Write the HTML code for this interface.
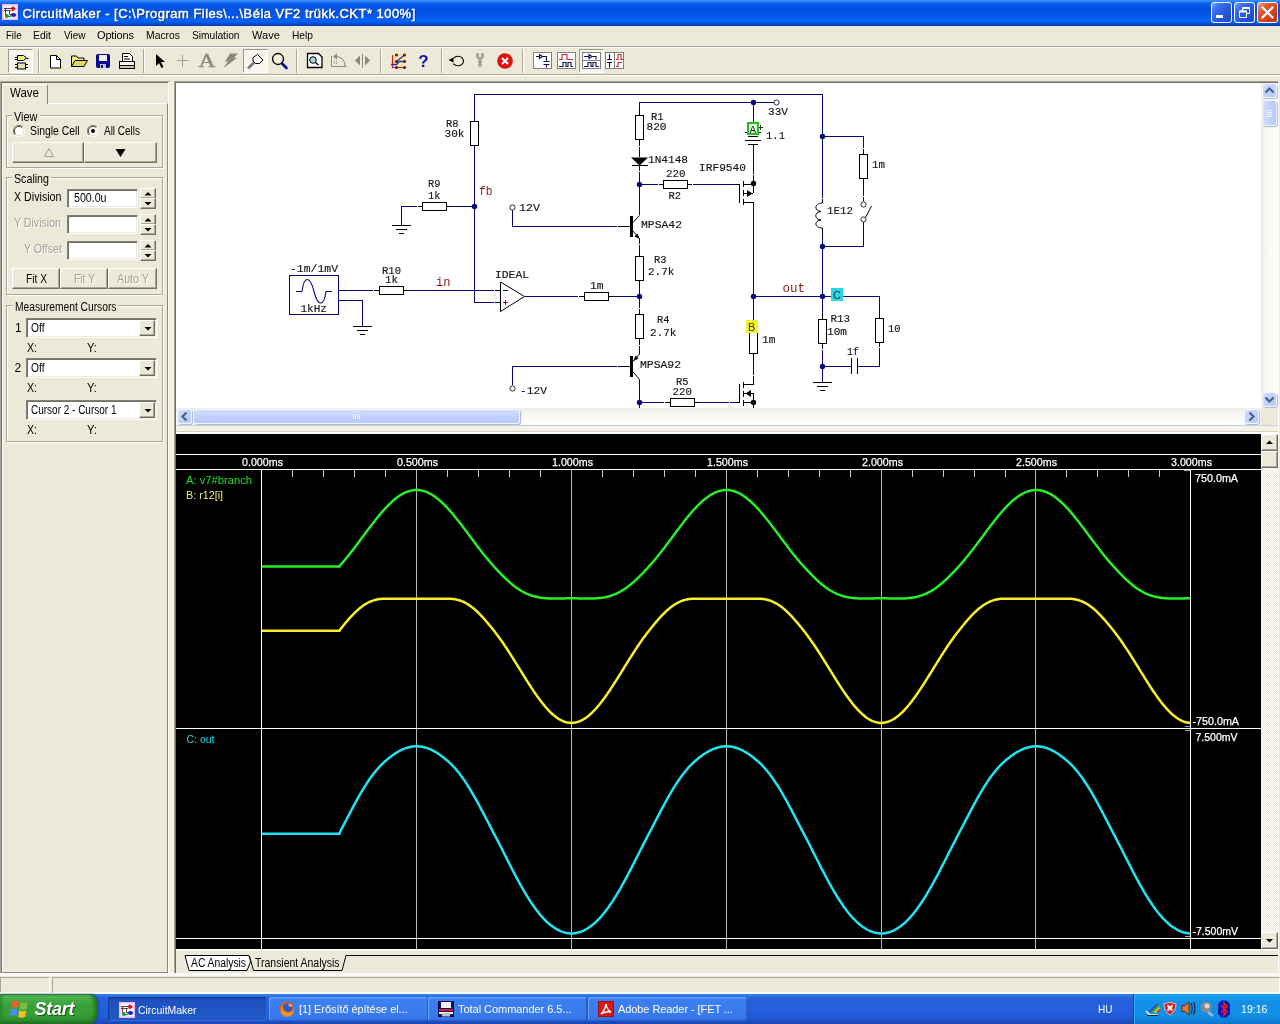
<!DOCTYPE html>
<html lang="hu"><head><meta charset="utf-8"><title>CircuitMaker</title>
<style>
*{box-sizing:border-box;margin:0;padding:0}
html,body{width:1280px;height:1024px;overflow:hidden;background:#ece9d8}
body{position:relative;font-family:"Liberation Sans",sans-serif;font-size:11px;color:#000}
div,span,i,svg{position:absolute;display:block}
#root{left:0;top:0;width:1280px;height:1024px;overflow:hidden;will-change:transform;background:#ece9d8}
.abs{position:absolute}
.t{white-space:pre;line-height:1;font-style:normal;transform-origin:0 0}
#titlebar{left:0;top:0;width:1280px;height:26px;background:linear-gradient(to bottom,#3d95ff 0,#2f86fa 1px,#1168f0 3px,#0658e8 5px,#0353e2 9px,#0456e8 15px,#0661f5 19px,#0560f2 22px,#0349cc 24px,#023aa8 26px)}
.wbtn{top:2px;width:21px;height:21px;border:1px solid #fff;border-radius:3px;background:linear-gradient(135deg,#7aa4f8 0,#3c6ef0 25%,#2458e0 60%,#1c48c8 100%)}
.wbtn svg{left:-1px;top:-1px}
.wbtn.close{background:linear-gradient(135deg,#f0a088 0,#e05a38 30%,#d04018 70%,#b83010 100%)}
#menubar{left:0;top:26px;width:1280px;height:20px;background:#ece9d8}
#toolbar{left:0;top:46px;width:1280px;height:30px;background:#ece9d8;border-top:1px solid #aca899;box-shadow:inset 0 1px 0 #fff}
#toolbar>svg{top:0!important}
#tbline{left:0;top:74px;width:1280px;height:2px;border-top:1px solid #aca899;border-bottom:1px solid #fff}
.tsep{top:2px;width:2px;height:24px;border-left:1px solid #aca899;border-right:1px solid #fff}
.tchk{top:2px;height:24px;background:#f6f5ee;border:1px solid;border-color:#9c9a8c #fff #fff #9c9a8c}
#lpanel{left:0;top:81px;width:170px;height:893px;background:#ece9d8;box-shadow:inset 1px 1px 0 #aca899,inset 2px 2px 0 #716f64}
#lpedge{left:168px;top:82px;width:6px;height:892px;background:#f3f1e6;border-left:1px solid #fff}
#lpbot{left:0;top:973px;width:174px;height:1px;background:#fff}
#tabpage{left:2px;top:22px;width:166px;height:870px;border:1px solid;border-color:#fff #8c897c #8c897c #fff}
#tab{left:2px;top:3px;width:46px;height:20px;background:#ece9d8;border:1px solid;border-color:#fff #8c897c transparent #fff;border-bottom:0;border-radius:2px 2px 0 0}
.grp{border:1px solid #aca899;box-shadow:1px 1px 0 #fff,inset 1px 1px 0 #fff}
.glbl{background:#ece9d8}
.btn{background:#ece9d8;border:1px solid;border-color:#fff #716f64 #716f64 #fff;box-shadow:inset -1px -1px 0 #aca899}
.edit{background:#fff;border:1px solid;border-color:#848078 #fff #fff #848078;box-shadow:inset 1px 1px 0 #716f64,inset -1px -1px 0 #ece9d8}
#sframe{left:174px;top:81px;width:1105px;height:893px;border:1px solid;border-color:#aca899 #fff #fff #aca899;box-shadow:inset 1px 1px 0 #716f64;background:#ece9d8}
#sbg{left:176px;top:83px;width:1085px;height:325px;background:#fff}
#schem{left:176px;top:83px}
#vsb{left:1261px;top:83px;width:17px;height:325px;background:linear-gradient(to right,#eeede5,#f8f8f4 40%,#fdfdfb)}
#hsb{left:176px;top:408px;width:1085px;height:17px;background:linear-gradient(to bottom,#eeede5,#f8f8f4 40%,#fdfdfb)}
#sbcorner{left:1261px;top:408px;width:17px;height:17px;background:#ece9d8}
.sbb{width:15px;height:15px;border:1px solid #f4f7fe;border-radius:3px;background:linear-gradient(135deg,#d2defd,#c0d2fc 50%,#b6caf9);box-shadow:1px 1px 1px #a8b4d0}
.sbt{border:1px solid #f4f7fe;border-radius:3px;background:linear-gradient(to right,#d2defd,#c2d3fc 50%,#b6caf9);box-shadow:1px 1px 1px #a8b4d0}
.sbt.h{background:linear-gradient(to bottom,#d2defd,#c2d3fc 50%,#b6caf9)}
#split{left:176px;top:425px;width:1102px;height:9px;background:#f4f2e8;border-top:1px solid #c9d0dc;border-bottom:2px solid #fff;box-shadow:inset 0 -1px 0 #d8d2bd}
#wave{left:176px;top:434px}
#wsb{left:1261px;top:434px;width:17px;height:515px;background:repeating-conic-gradient(#fff 0 25%,#ece9d8 0 50%) 0 0/2px 2px}
#tabs{left:176px;top:949px;width:1102px;height:24px;background:#ece9d8;box-shadow:inset 0 1px 0 #fff,inset 0 2px 0 #f6f4ec}
#statusbar{left:0;top:973px;width:1280px;height:21px;background:#ece9d8;border-top:3px solid #fbfaf6;border-bottom:1px solid #fff}
.spane{top:1px;height:16px;border:1px solid;border-color:#aca899 #fff #fff #aca899}
#taskbar{left:0;top:994px;width:1280px;height:30px;background:linear-gradient(to bottom,#3c84f0 0,#2868e0 3px,#2460dc 6px,#245edc 18px,#2058d0 24px,#1c4cc0 28px,#1a44b0 30px)}
#start{left:0;top:0;width:98px;height:30px;border-radius:0 7px 7px 0 / 0 15px 15px 0;background:linear-gradient(to bottom,#2c7c2c 0,#58b858 2px,#44ac44 6px,#38a038 12px,#36a036 20px,#2e8e30 26px,#236c26 30px);box-shadow:inset -4px 0 5px -2px #1c5c20,inset 3px 0 4px -2px #267a28,1px 0 2px #1840a0}
.task{top:3px;width:159px;height:24px;border-radius:3px;background:linear-gradient(to bottom,#4c90f8 0,#3c80f0 3px,#3878ec 20px,#3070e0 24px);box-shadow:inset 1px 1px 0 #6aa4fc,inset -1px -1px 0 #2a5cc8}
.task.act{background:linear-gradient(to bottom,#1a48b0 0,#1e50c0 4px,#2058c8 20px,#2058c8 24px);box-shadow:inset 1px 1px 1px #123890,inset -1px -1px 0 #3068d8}
#tray{left:1133px;top:0;width:147px;height:30px;background:linear-gradient(to bottom,#1ca0f0 0,#189cf0 2px,#1290e8 8px,#1290e8 20px,#0f80d8 27px,#0c70c8 30px);border-left:1px solid #0a3c90;box-shadow:inset 1px 0 0 #38b0f8}
</style></head>
<body>
<div id="root">
<div id="titlebar">
<svg class="abs" style="left:2px;top:4px" width="16" height="16" viewBox="0 0 16 16"><rect x="0" y="0" width="16" height="16" fill="#f8b8f4"/><rect x="1.500" y="1.500" width="13" height="13" fill="#fdf4fc"/><path d="M2 4.500H10 M2 6.500H9 M3.500 4V12 M7.500 6.500V10.500H11" stroke="#504040" stroke-width="1" fill="none"/><path d="M10 2.300L14.300 4.800L10 7.300Z" fill="#d81818"/><circle cx="11" cy="4.800" r="2" fill="#d81818"/><ellipse cx="11.500" cy="11" rx="2.600" ry="2.100" fill="#1424b8"/><circle cx="4.800" cy="12" r="1.900" fill="#18a038"/><path d="M5 12.500Q8 13 9.500 11.500" stroke="#18a038" stroke-width="1.200" fill="none"/></svg>
<span class="t" style="left:22.5px;top:7px;font-size:13px;color:#fff;letter-spacing:0.47px;-webkit-text-stroke:0.45px #fff;text-shadow:1px 1px 0 #0a2a7a;">CircuitMaker - [C:\Program Files\...\Béla VF2 trükk.CKT* 100%]</span>
<div class="wbtn" style="left:1211px"><svg width="21" height="21" viewBox="0 0 21 21"><rect x="5" y="13" width="7" height="3" fill="#fff"/></svg></div>
<div class="wbtn" style="left:1234px"><svg width="21" height="21" viewBox="0 0 21 21"><path d="M8.5 5.5h7v6h-7z M8.5 6.5h7" fill="none" stroke="#fff" stroke-width="1"/><path d="M5.5 9h7v6.5h-7z" fill="#2d63d8" stroke="#fff" stroke-width="1"/><path d="M5.5 9.5h7" stroke="#fff" stroke-width="2"/></svg></div>
<div class="wbtn close" style="left:1257px"><svg width="21" height="21" viewBox="0 0 21 21"><path d="M5.5 5.5l10 10M15.5 5.5l-10 10" stroke="#fff" stroke-width="2.2" stroke-linecap="round"/></svg></div>
</div>
<div id="menubar">
<span class="t" style="left:5.5px;top:4px;font-size:11px;color:#000;transform:scaleX(0.874);">File</span>
<span class="t" style="left:33px;top:4px;font-size:11px;color:#000;transform:scaleX(0.949);">Edit</span>
<span class="t" style="left:63.5px;top:4px;font-size:11px;color:#000;transform:scaleX(0.909);">View</span>
<span class="t" style="left:97px;top:4px;font-size:11px;color:#000;letter-spacing:-0.15px;">Options</span>
<span class="t" style="left:146px;top:4px;font-size:11px;color:#000;transform:scaleX(0.943);">Macros</span>
<span class="t" style="left:192px;top:4px;font-size:11px;color:#000;transform:scaleX(0.925);">Simulation</span>
<span class="t" style="left:252px;top:4px;font-size:11px;color:#000;letter-spacing:0.09px;">Wave</span>
<span class="t" style="left:292px;top:4px;font-size:11px;color:#000;transform:scaleX(0.928);">Help</span>
</div>
<div id="toolbar">
<i class="tsep" style="left:38px"></i>
<i class="tsep" style="left:143px"></i>
<i class="tsep" style="left:296px"></i>
<i class="tsep" style="left:380px"></i>
<i class="tsep" style="left:441px"></i>
<i class="tsep" style="left:522px"></i>
<i class="tchk" style="left:8px;width:25px"></i>
<i class="tchk" style="left:243px;width:25px"></i>
<i class="tchk" style="left:579px;width:25px"></i>
<svg class="abs" style="left:0;top:0" width="640" height="28" viewBox="0 47 640 28">
<g stroke="#000" stroke-width="1" fill="#f0f080"><path d="M17.5 55.5h6l3 2.5l-3 2.500h-6z"/><path d="M15 57.500h2.500M15 59.500h2.500M26.500 58.500h2"/><rect x="17.500" y="63" width="8" height="6" fill="#e8e0a0"/><path d="M15 64.500h2.500M15 67.500h2.500M25.500 64.500h2.500M25.500 67.500h2.500"/></g>
<path d="M50.500 55.500h6l4 4v8.500h-10z" fill="#fff" stroke="#000"/><path d="M56.500 55.500v4h4" fill="none" stroke="#000"/><path d="M49 61l-1.500 0M61 56l2-2M62 67l1.500 1.500" stroke="#f0f040" stroke-width="1.500"/>
<path d="M71.500 66.500v-10.500h5l1.500 2h6v2.500" fill="#f0f080" stroke="#000"/><path d="M71.500 66.500l3.500-6h12.500l-3.500 6z" fill="#e0d860" stroke="#000"/>
<rect x="96.500" y="54.500" width="13" height="13" rx="1" fill="#0a0a90" stroke="#0a0a90"/><rect x="99" y="55" width="8" height="6" fill="#f0f0f0"/><rect x="100" y="64" width="6" height="4" fill="#c0c0d8"/><rect x="101" y="65" width="2" height="3" fill="#0a0a90"/>
<path d="M122.500 61.500v-8h7l3 3v5" fill="#fff" stroke="#000"/><path d="M124 56.500h4M124 59h6" stroke="#000"/><rect x="119.500" y="61.500" width="15" height="4" fill="#f8f8f0" stroke="#000"/><rect x="119.500" y="65.500" width="15" height="3" fill="#c8c8b8" stroke="#000"/>
<path d="M156 54v12l3-3l2.500 5l2-1l-2.500-5h4z" fill="#000"/>
<path d="M182.500 55v12M177 60.500h11.500" stroke="#a0a098" stroke-width="1" fill="none"/>
<text x="0" y="0" transform="translate(198.500 67) scale(1.2 1)" font-family="'Liberation Serif', serif" font-size="19.500" fill="#8a8880" stroke="#8a8880" stroke-width="0.400">A</text>
<path d="M230 53.500L238 53.500L234 58L237 58L223.500 68L228 61.500L225 61.500Z" fill="#8a8880"/>
<path d="M257.500 54.500l5.500 5.500l-3.500 3.500h-4l-2.500-2.500v-3.500z" fill="#f8f8f0" stroke="#000"/><path d="M253.500 62l-5.500 5.500l1 1l5.500-5.500" fill="#fff" stroke="#000"/>
<circle cx="278" cy="59" r="5.500" fill="#f4f0e4" stroke="#000" stroke-width="1.300"/><path d="M282 63.500l4.500 4.500" stroke="#0a0a90" stroke-width="2.600" stroke-linecap="round"/>
<path d="M307.500 53.500h11l3.500 3.500v10.500h-14.500z" fill="#fff" stroke="#000" stroke-width="1.300"/><circle cx="313" cy="60" r="3.300" fill="#a8d8d8" stroke="#000"/><path d="M315.500 62.500l3 2.500" stroke="#000" stroke-width="1.500"/>
<path d="M331.500 56v10.500h15" fill="none" stroke="#8a8880"/><path d="M336 56.500a9 9 0 0 1 9 9.500" fill="none" stroke="#8a8880"/><path d="M333 56.500l4-3v6z" fill="#8a8880"/><path d="M334 61.500h4M334 63.500h4" stroke="#8a8880" stroke-dasharray="1 1"/>
<path d="M362.500 54v14" stroke="#8a8880"/><path d="M360 55.500v10l-5-5z M365 55.500v10l5-5z" fill="#8a8880"/>
<circle cx="399" cy="60" r="7" fill="#f8e878" opacity="0.55"/><path d="M392.500 55v12.500h13" fill="none" stroke="#d02020" stroke-width="1.200"/><path d="M391 64.500h5.500l3-3h6M396.500 61.500l8.500-7" fill="none" stroke="#2030b0" stroke-width="1.300"/><g fill="#602020"><circle cx="396.500" cy="55" r="1.600"/><circle cx="404.500" cy="55" r="1.600"/><circle cx="396.500" cy="61.500" r="1.600"/><circle cx="404.500" cy="61.500" r="1.600"/><circle cx="396.500" cy="67.500" r="1.600"/><circle cx="404.500" cy="67.500" r="1.600"/></g>
<text x="423.500" y="66.500" font-family="'Liberation Sans', sans-serif" font-size="17" font-weight="bold" fill="#1010b0" text-anchor="middle">?</text>
<ellipse cx="458" cy="61" rx="5.500" ry="4.800" fill="none" stroke="#000" stroke-width="1.100" stroke-dasharray="27 6" stroke-dashoffset="-19"/><path d="M448.500 60l5-2.500v5z" fill="#000"/>
<path d="M476.500 53.500v4l2 2v6a1.500 1.500 0 0 0 3 0v-6l2-2v-4h-2v3.500h-3v-3.500z" fill="#a8a698" stroke="#a8a698" stroke-width="0.800"/>
<circle cx="505" cy="61" r="7.800" fill="#e01010"/><path d="M502 58l6 6M508 58l-6 6" stroke="#fff" stroke-width="2"/>
<rect x="533.5" y="52.500" width="18" height="16" fill="#fff" stroke="#808080"/><path d="M536 56.500h3.500M539.500 54.500v4l3-2zM542.500 56.500h4v4.500M543.500 61.500h6M543.500 64.500h6M546.500 64.500v3" fill="none" stroke="#101050" stroke-width="1.100"/>
<rect x="557.5" y="52.500" width="18" height="16" fill="#fff" stroke="#808080"/><path d="M559 59.500h3v-5h5v5h6" fill="none" stroke="#d02020" stroke-width="1.100"/><path d="M559 66.500h4v-4h3v4h2v-4h3v4h2" fill="none" stroke="#101050" stroke-width="1.100"/>
<rect x="582.5" y="52.500" width="18" height="16" fill="#fff" stroke="#808080"/><path d="M582.500 60.500h18" stroke="#808080"/><path d="M584 56.500h5M589 54.500v4l3-2zM592 56.500h4v3" fill="none" stroke="#101050" stroke-width="1.100"/><path d="M584 66.500h4v-4h3v4h2v-4h3v4h3" fill="none" stroke="#101050" stroke-width="1.100"/>
<rect x="605.5" y="52.500" width="18" height="16" fill="#fff" stroke="#808080"/><path d="M614.500 52.500v16" stroke="#808080"/><path d="M609.500 54v5M607 59.500h5M607 62.500h5M609.500 62.500v5" fill="none" stroke="#101050" stroke-width="1.100"/><path d="M616 59.500h2v-5h3v5h2M616 66.500h2v-4h4" fill="none" stroke="#d02020" stroke-width="1.100"/>
</svg>
</div>
<div id="tbline"></div>
<div id="lpanel">
<div id="tabpage"></div>
<div id="tab"></div>
<span class="t" style="left:10px;top:6px;font-size:12px;color:#000;transform:scaleX(0.959);">Wave</span>
<div class="grp" style="left:6px;top:34px;width:157px;height:53px"></div><span class="glbl" style="left:12px;top:29px;width:27.5px;height:12px"></span><span class="t" style="left:14px;top:30px;font-size:12px;color:#000;transform:scaleX(0.911);">View</span>
<svg class="abs" style="left:13px;top:43.5px" width="12" height="12" viewBox="0 0 12 12"><circle cx="6" cy="6" r="5.500" fill="#fff"/><path d="M10 2A5.500 5.500 0 0 0 2 10" fill="none" stroke="#848078" stroke-width="1"/><path d="M9.300 2.700A4.500 4.500 0 0 0 2.700 9.300" fill="none" stroke="#404040" stroke-width="1"/><path d="M2 10A5.500 5.500 0 0 0 10 2" fill="none" stroke="#fff" stroke-width="1"/><path d="M2.700 9.300A4.500 4.500 0 0 0 9.300 2.700" fill="none" stroke="#e0dcd0" stroke-width="1"/></svg>
<span class="t" style="left:30px;top:44px;font-size:12px;color:#000;transform:scaleX(0.863);">Single Cell</span>
<svg class="abs" style="left:87px;top:43.5px" width="12" height="12" viewBox="0 0 12 12"><circle cx="6" cy="6" r="5.500" fill="#fff"/><path d="M10 2A5.500 5.500 0 0 0 2 10" fill="none" stroke="#848078" stroke-width="1"/><path d="M9.300 2.700A4.500 4.500 0 0 0 2.700 9.300" fill="none" stroke="#404040" stroke-width="1"/><path d="M2 10A5.500 5.500 0 0 0 10 2" fill="none" stroke="#fff" stroke-width="1"/><path d="M2.700 9.300A4.500 4.500 0 0 0 9.300 2.700" fill="none" stroke="#e0dcd0" stroke-width="1"/><circle cx="6" cy="6" r="2" fill="#000"/></svg>
<span class="t" style="left:104px;top:44px;font-size:12px;color:#000;transform:scaleX(0.831);">All Cells</span>
<div class="btn" style="left:12px;top:61px;width:72px;height:21px"><svg class="abs" style="left:0;top:0" width="72" height="20"><path d="M31.500 13.500h9l-4.500-8z" fill="none" stroke="#a0a098"/></svg></div>
<div class="btn" style="left:84px;top:61px;width:73px;height:21px"><svg class="abs" style="left:0;top:0" width="73" height="20"><path d="M30.500 6h10l-5 8z" fill="#000"/></svg></div>
<div class="grp" style="left:6px;top:96px;width:157px;height:118px"></div><span class="glbl" style="left:12px;top:91px;width:39px;height:12px"></span><span class="t" style="left:14px;top:92px;font-size:12px;color:#000;transform:scaleX(0.889);">Scaling</span>
<span class="t" style="left:13.5px;top:110px;font-size:12px;color:#000;transform:scaleX(0.890);">X Division</span>
<div class="edit" style="left:67px;top:108px;width:71px;height:19px"></div>
<span class="t" style="left:73.5px;top:111px;font-size:12px;color:#000;transform:scaleX(0.885);">500.0u</span>
<div class="btn" style="left:140px;top:107px;width:16px;height:11px"><svg class="abs" style="left:-1px;top:-1px" width="16" height="11"><path d="M4.500 7.500h7l-3.500-3.500z" fill="#000"/></svg></div><div class="btn" style="left:140px;top:117px;width:16px;height:11px"><svg class="abs" style="left:-1px;top:-1px" width="16" height="11"><path d="M4.500 4h7l-3.500 3.500z" fill="#000"/></svg></div>
<span class="t" style="left:14px;top:136px;font-size:12px;color:#a0a098;transform:scaleX(0.884);text-shadow:1px 1px 0 #fff;">Y Division</span>
<div class="edit" style="left:67px;top:134px;width:71px;height:19px"></div>
<div class="btn" style="left:140px;top:133px;width:16px;height:11px"><svg class="abs" style="left:-1px;top:-1px" width="16" height="11"><path d="M4.500 7.500h7l-3.500-3.500z" fill="#000"/></svg></div><div class="btn" style="left:140px;top:143px;width:16px;height:11px"><svg class="abs" style="left:-1px;top:-1px" width="16" height="11"><path d="M4.500 4h7l-3.500 3.500z" fill="#000"/></svg></div>
<span class="t" style="left:24px;top:162px;font-size:12px;color:#a0a098;transform:scaleX(0.885);text-shadow:1px 1px 0 #fff;">Y Offset</span>
<div class="edit" style="left:67px;top:160px;width:71px;height:19px"></div>
<div class="btn" style="left:140px;top:159px;width:16px;height:11px"><svg class="abs" style="left:-1px;top:-1px" width="16" height="11"><path d="M4.500 7.500h7l-3.500-3.500z" fill="#000"/></svg></div><div class="btn" style="left:140px;top:169px;width:16px;height:11px"><svg class="abs" style="left:-1px;top:-1px" width="16" height="11"><path d="M4.500 4h7l-3.500 3.500z" fill="#000"/></svg></div>
<div class="btn" style="left:12px;top:187px;width:48px;height:21px"></div>
<span class="t" style="left:26px;top:192px;font-size:12px;color:#000;transform:scaleX(0.851);">Fit X</span>
<div class="btn" style="left:60px;top:187px;width:48px;height:21px"></div>
<span class="t" style="left:74px;top:192px;font-size:12px;color:#a0a098;transform:scaleX(0.859);text-shadow:1px 1px 0 #fff;">Fit Y</span>
<div class="btn" style="left:108px;top:187px;width:49px;height:21px"></div>
<span class="t" style="left:117px;top:192px;font-size:12px;color:#a0a098;transform:scaleX(0.894);text-shadow:1px 1px 0 #fff;">Auto Y</span>
<div class="grp" style="left:6px;top:224px;width:157px;height:137px"></div><span class="glbl" style="left:12.5px;top:219px;width:105.5px;height:12px"></span><span class="t" style="left:14.5px;top:220px;font-size:12px;color:#000;transform:scaleX(0.855);">Measurement Cursors</span>
<span class="t" style="left:15px;top:241px;font-size:12px;color:#000;">1</span>
<div class="edit" style="left:26px;top:237px;width:131px;height:20px"></div><div class="btn" style="left:139px;top:239px;width:16px;height:16px"><svg class="abs" style="left:0;top:0" width="16" height="15"><path d="M4.500 6h7l-3.500 3.500z" fill="#000"/></svg></div><span class="t" style="left:30.5px;top:241px;font-size:12px;color:#000;transform:scaleX(0.855);">Off</span>
<span class="t" style="left:26.5px;top:261px;font-size:12px;color:#000;transform:scaleX(0.882);">X:</span>
<span class="t" style="left:86.5px;top:261px;font-size:12px;color:#000;transform:scaleX(0.936);">Y:</span>
<span class="t" style="left:14.5px;top:281px;font-size:12px;color:#000;">2</span>
<div class="edit" style="left:26px;top:277px;width:131px;height:20px"></div><div class="btn" style="left:139px;top:279px;width:16px;height:16px"><svg class="abs" style="left:0;top:0" width="16" height="15"><path d="M4.500 6h7l-3.500 3.500z" fill="#000"/></svg></div><span class="t" style="left:30.5px;top:281px;font-size:12px;color:#000;transform:scaleX(0.855);">Off</span>
<span class="t" style="left:26.5px;top:301px;font-size:12px;color:#000;transform:scaleX(0.882);">X:</span>
<span class="t" style="left:86.5px;top:301px;font-size:12px;color:#000;transform:scaleX(0.936);">Y:</span>
<div class="edit" style="left:26px;top:319px;width:131px;height:20px"></div><div class="btn" style="left:139px;top:321px;width:16px;height:16px"><svg class="abs" style="left:0;top:0" width="16" height="15"><path d="M4.500 6h7l-3.500 3.500z" fill="#000"/></svg></div><span class="t" style="left:30.5px;top:323px;font-size:12px;color:#000;transform:scaleX(0.832);">Cursor 2 - Cursor 1</span>
<span class="t" style="left:26.5px;top:343px;font-size:12px;color:#000;transform:scaleX(0.882);">X:</span>
<span class="t" style="left:86.5px;top:343px;font-size:12px;color:#000;transform:scaleX(0.936);">Y:</span>
</div>
<div id="lpedge"></div><div id="lpbot"></div>
<div id="sframe"></div><div id="sbg"></div>
<svg id="schem" width="1085" height="325" viewBox="176 83 1085 325" shape-rendering="crispEdges" font-family="'Liberation Mono', monospace">
<g shape-rendering="crispEdges">
<path d="M474.5 121V94.5H822.5V200 M639.5 109V102.5H776 M753.5 102V122 M753.5 146V176 M474.5 145V302.5H494 M401.5 225V206.5H417 M451 206.5H474 M339 290.5H374 M408 290.5H494 M339 300.500H362.500V326 M512.5 210V226.5H618 M512.5 385V366.5H618 M525 296.5H579 M613 296.5H639 M639.5 145V157 M639.5 166V215 M639.5 184.5H658 M693 184.5H739 M639.5 243V250 M639.5 286V308 M639.5 344V351 M639.5 380V409 M639.5 402.5H665 M699 402.5H735 M753.5 203V323 M753.5 359V378 M753.5 403V409 M753.5 296.5H879.500V312 M822.5 136.5H863.500V149 M863.5 184V197 M863.5 222V246.500H822 M822.5 233V313 M822.5 349V382 M822.5 366.5H851 M858 366.5H879.500V348" stroke="#06067a" fill="none"/>
<rect x="289.5" y="275.5" width="49" height="39" fill="#fff" stroke="#06067a"/>
<path d="M296 291.5H302 M326 291.5H332" stroke="#06067a"/>
<path d="M302 291.500C304 275.500 310 275.500 314 291.500S324 306 326 291.500" stroke="#06067a" fill="none" shape-rendering="auto" stroke-width="1.100"/>
<path d="M374 290.5H379 M403 290.5H408" stroke="#000"/><rect x="379.5" y="286.5" width="24" height="8" fill="#fff" stroke="#000"/>
<path d="M417 206.5H422 M446 206.5H451" stroke="#000"/><rect x="422.5" y="202.5" width="24" height="8" fill="#fff" stroke="#000"/>
<path d="M474.5 121V121 M474.5 145V145" stroke="#000"/><rect x="470.5" y="121.5" width="8" height="24" fill="#fff" stroke="#000"/>
<path d="M639.5 109V115 M639.5 139V145" stroke="#000"/><rect x="635.5" y="115.5" width="8" height="24" fill="#fff" stroke="#000"/>
<path d="M658 184.5H663 M687 184.5H692" stroke="#000"/><rect x="663.5" y="180.5" width="24" height="8" fill="#fff" stroke="#000"/>
<path d="M639.5 250V256 M639.5 280V286" stroke="#000"/><rect x="635.5" y="256.5" width="8" height="24" fill="#fff" stroke="#000"/>
<path d="M579 296.5H584 M608 296.5H613" stroke="#000"/><rect x="584.5" y="292.5" width="24" height="8" fill="#fff" stroke="#000"/>
<path d="M639.5 308V314 M639.5 338V344" stroke="#000"/><rect x="635.5" y="314.5" width="8" height="24" fill="#fff" stroke="#000"/>
<path d="M665 402.5H670 M694 402.5H699" stroke="#000"/><rect x="670.5" y="398.5" width="24" height="8" fill="#fff" stroke="#000"/>
<path d="M863.5 148V154 M863.5 178V184" stroke="#000"/><rect x="859.5" y="154.5" width="8" height="24" fill="#fff" stroke="#000"/>
<path d="M753.5 323V329 M753.5 353V359" stroke="#000"/><rect x="749.5" y="329.5" width="8" height="24" fill="#fff" stroke="#000"/>
<path d="M822.5 313V319 M822.5 343V349" stroke="#000"/><rect x="818.5" y="319.5" width="8" height="24" fill="#fff" stroke="#000"/>
<path d="M879.5 312V318 M879.5 342V348" stroke="#000"/><rect x="875.5" y="318.5" width="8" height="24" fill="#fff" stroke="#000"/>
<path d="M353 326.5H372 M357 330.5H368 M360 334.5H365" stroke="#000"/>
<path d="M392 225.5H411 M396 229.5H407 M399 233.5H404" stroke="#000"/>
<path d="M813 382.5H832 M817 386.5H828 M820 390.5H825" stroke="#000"/>
<path d="M494 290.5H500 M494 302.5H500" stroke="#000"/>
<path d="M500.5 282L524.500 296.500L500.500 311.500Z" fill="#fff" stroke="#000" shape-rendering="auto"/>
<path d="M503 290.500H508" stroke="#06067a"/>
<path d="M503 302.500H508 M505.500 300V305" stroke="#c00000"/>
<path d="M631 157.500H648L639.500 165.500Z" fill="#000" shape-rendering="auto"/><path d="M632 165.500H648" stroke="#000"/>
<rect x="630" y="216" width="3" height="21" fill="#000"/>
<path d="M618 226.500H630" stroke="#000"/>
<path d="M633 222.500L639.500 215.500 M633 231L639.500 238.500V243" stroke="#000" fill="none" shape-rendering="auto"/>
<path d="M639.500 239L634.500 236.500L637.500 233.500Z" fill="#000" shape-rendering="auto"/>
<rect x="630" y="356" width="3" height="21" fill="#000"/>
<path d="M618 366.500H630" stroke="#000"/>
<path d="M639.500 351V354L633 361.500 M633 372L639.500 379.500V381" stroke="#000" fill="none" shape-rendering="auto"/>
<path d="M633.500 361L638.500 358.500L635.500 355.500Z" fill="#000" shape-rendering="auto"/>
<circle cx="512.5" cy="207.5" r="2.600" fill="#fff" stroke="#181818" stroke-width="0.900" shape-rendering="geometricPrecision"/>
<circle cx="512.5" cy="388.5" r="2.600" fill="#fff" stroke="#181818" stroke-width="0.900" shape-rendering="geometricPrecision"/>
<circle cx="776.5" cy="102.5" r="2.600" fill="#fff" stroke="#181818" stroke-width="0.900" shape-rendering="geometricPrecision"/>
<path d="M745 132.500H761 M748 136.500H758 M745 140.500H761 M748 144.500H758" stroke="#000"/>
<path d="M753.500 122V132 M753.500 145V147" stroke="#000"/>
<path d="M758 127.500H763 M760.500 125V130" stroke="#303030"/>
<path d="M739.500 184V203 M743.500 181V187 M743.500 190V196 M743.500 199V205 M744 184.500H753 M744 193.500H753 M753.500 184V193 M744 202.500H753.500 M753.500 176V184 M735 184.500H740" stroke="#000" fill="none"/>
<path d="M752.500 193.500L747 190V197Z" fill="#000" shape-rendering="auto"/>
<circle cx="753.5" cy="183.5" r="2.700" fill="#000" shape-rendering="geometricPrecision"/>
<path d="M739.500 384V403 M743.500 382V388 M743.500 391V397 M743.500 400V406 M744 384.500H753.500V378 M744 393.500H753.500V402 M744 402.500H753 M735 402.500H740" stroke="#000" fill="none"/>
<path d="M745.500 393.500L751 390V397Z" fill="#000" shape-rendering="auto"/>
<circle cx="753.5" cy="402.5" r="2.700" fill="#000" shape-rendering="geometricPrecision"/>
<path d="M822.500 198V203 M822.500 228V233" stroke="#000"/>
<path d="M822.500 203C814 203 814 211 821 211.500C814 212 814 219.500 821 220C814 220.500 814 228 822.500 228" stroke="#000" fill="none" shape-rendering="auto"/>
<path d="M863.500 197V201 M863.500 222V224" stroke="#000"/>
<circle cx="863.5" cy="204.5" r="2.600" fill="#fff" stroke="#181818" stroke-width="0.900" shape-rendering="geometricPrecision"/>
<circle cx="863.5" cy="219.5" r="2.600" fill="#fff" stroke="#181818" stroke-width="0.900" shape-rendering="geometricPrecision"/>
<path d="M865.500 217.500L871.500 206" stroke="#000" shape-rendering="auto"/>
<path d="M851.500 358V374 M857.500 358V374" stroke="#000"/>
<path d="M373 290.5h1 M417 206.5h1 M494 290.5h1 M494 302.5h1 M617 226.5h1 M617 366.5h1 M578 296.5h1 M664 402.5h1 M729 402.5h1 M658 184.5h1 M639.5 244v1 M639.5 308v1 M639.5 171v1 M639.5 146v1 M753.5 174v1 M753.5 375v1 M822.5 349v1 M879.5 347v1 M863.5 148v1 M822.5 198v1 M863.5 196v1 M639.5 345v1" stroke="#fff"/>
<circle cx="474.5" cy="206.5" r="2.700" fill="#06067a" shape-rendering="geometricPrecision"/>
<circle cx="639.5" cy="184.5" r="2.700" fill="#06067a" shape-rendering="geometricPrecision"/>
<circle cx="639.5" cy="296.5" r="2.700" fill="#06067a" shape-rendering="geometricPrecision"/>
<circle cx="639.5" cy="402.5" r="2.700" fill="#06067a" shape-rendering="geometricPrecision"/>
<circle cx="753.5" cy="102.5" r="2.700" fill="#06067a" shape-rendering="geometricPrecision"/>
<circle cx="753.5" cy="296.5" r="2.700" fill="#06067a" shape-rendering="geometricPrecision"/>
<circle cx="822.5" cy="136.5" r="2.700" fill="#06067a" shape-rendering="geometricPrecision"/>
<circle cx="822.5" cy="246.5" r="2.700" fill="#06067a" shape-rendering="geometricPrecision"/>
<circle cx="822.5" cy="296.5" r="2.700" fill="#06067a" shape-rendering="geometricPrecision"/>
<circle cx="822.5" cy="366.5" r="2.700" fill="#06067a" shape-rendering="geometricPrecision"/>
<rect x="748" y="123" width="10" height="11" fill="#e8ffe0" stroke="#20c020" stroke-width="2"/>
<rect x="746" y="320" width="12" height="13" fill="#f4f428"/>
<rect x="831" y="288" width="12" height="13" fill="#28d8e8"/>
</g>
<g shape-rendering="auto">
<text x="290" y="272" font-size="11.5" fill="#141414" textLength="48" lengthAdjust="spacingAndGlyphs" stroke="#141414" stroke-width="0.150">-1m/1mV</text>
<text x="300.5" y="312" font-size="11.5" fill="#141414" textLength="26.5" lengthAdjust="spacingAndGlyphs" stroke="#141414" stroke-width="0.150">1kHz</text>
<text x="382" y="274" font-size="11.5" fill="#141414" textLength="19" lengthAdjust="spacingAndGlyphs" stroke="#141414" stroke-width="0.150">R10</text>
<text x="385" y="283" font-size="11.5" fill="#141414" textLength="13" lengthAdjust="spacingAndGlyphs" stroke="#141414" stroke-width="0.150">1k</text>
<text x="446" y="127" font-size="11.5" fill="#141414" textLength="12.5" lengthAdjust="spacingAndGlyphs" stroke="#141414" stroke-width="0.150">R8</text>
<text x="444.5" y="137" font-size="11.5" fill="#141414" textLength="20" lengthAdjust="spacingAndGlyphs" stroke="#141414" stroke-width="0.150">30k</text>
<text x="428" y="187" font-size="11.5" fill="#141414" textLength="12.5" lengthAdjust="spacingAndGlyphs" stroke="#141414" stroke-width="0.150">R9</text>
<text x="428" y="199" font-size="11.5" fill="#141414" textLength="12.5" lengthAdjust="spacingAndGlyphs" stroke="#141414" stroke-width="0.150">1k</text>
<text x="519" y="210.5" font-size="11.5" fill="#141414" textLength="21" lengthAdjust="spacingAndGlyphs" stroke="#141414" stroke-width="0.150">12V</text>
<text x="520" y="394" font-size="11.5" fill="#141414" textLength="27" lengthAdjust="spacingAndGlyphs" stroke="#141414" stroke-width="0.150">-12V</text>
<text x="495" y="278" font-size="11.5" fill="#141414" textLength="34" lengthAdjust="spacingAndGlyphs" stroke="#141414" stroke-width="0.150">IDEAL</text>
<text x="651" y="120" font-size="11.5" fill="#141414" textLength="12.5" lengthAdjust="spacingAndGlyphs" stroke="#141414" stroke-width="0.150">R1</text>
<text x="646.5" y="130" font-size="11.5" fill="#141414" textLength="20" lengthAdjust="spacingAndGlyphs" stroke="#141414" stroke-width="0.150">820</text>
<text x="648" y="163" font-size="11.5" fill="#141414" textLength="40" lengthAdjust="spacingAndGlyphs" stroke="#141414" stroke-width="0.150">1N4148</text>
<text x="666" y="176.5" font-size="11.5" fill="#141414" textLength="19.5" lengthAdjust="spacingAndGlyphs" stroke="#141414" stroke-width="0.150">220</text>
<text x="668.5" y="199" font-size="11.5" fill="#141414" textLength="12.5" lengthAdjust="spacingAndGlyphs" stroke="#141414" stroke-width="0.150">R2</text>
<text x="699" y="171" font-size="11.5" fill="#141414" textLength="47" lengthAdjust="spacingAndGlyphs" stroke="#141414" stroke-width="0.150">IRF9540</text>
<text x="641" y="228" font-size="11.5" fill="#141414" textLength="41" lengthAdjust="spacingAndGlyphs" stroke="#141414" stroke-width="0.150">MPSA42</text>
<text x="654" y="263" font-size="11.5" fill="#141414" textLength="12.5" lengthAdjust="spacingAndGlyphs" stroke="#141414" stroke-width="0.150">R3</text>
<text x="648" y="275" font-size="11.5" fill="#141414" textLength="26.5" lengthAdjust="spacingAndGlyphs" stroke="#141414" stroke-width="0.150">2.7k</text>
<text x="590" y="289" font-size="11.5" fill="#141414" textLength="13.5" lengthAdjust="spacingAndGlyphs" stroke="#141414" stroke-width="0.150">1m</text>
<text x="657" y="323" font-size="11.5" fill="#141414" textLength="12.5" lengthAdjust="spacingAndGlyphs" stroke="#141414" stroke-width="0.150">R4</text>
<text x="650" y="335.5" font-size="11.5" fill="#141414" textLength="26.5" lengthAdjust="spacingAndGlyphs" stroke="#141414" stroke-width="0.150">2.7k</text>
<text x="640" y="368" font-size="11.5" fill="#141414" textLength="41" lengthAdjust="spacingAndGlyphs" stroke="#141414" stroke-width="0.150">MPSA92</text>
<text x="676" y="385" font-size="11.5" fill="#141414" textLength="12.5" lengthAdjust="spacingAndGlyphs" stroke="#141414" stroke-width="0.150">R5</text>
<text x="672.5" y="395" font-size="11.5" fill="#141414" textLength="19.5" lengthAdjust="spacingAndGlyphs" stroke="#141414" stroke-width="0.150">220</text>
<text x="768" y="115" font-size="11.5" fill="#141414" textLength="20" lengthAdjust="spacingAndGlyphs" stroke="#141414" stroke-width="0.150">33V</text>
<text x="766" y="139" font-size="11.5" fill="#141414" textLength="19" lengthAdjust="spacingAndGlyphs" stroke="#141414" stroke-width="0.150">1.1</text>
<text x="827" y="214" font-size="11.5" fill="#141414" textLength="26" lengthAdjust="spacingAndGlyphs" stroke="#141414" stroke-width="0.150">1E12</text>
<text x="872" y="168" font-size="11.5" fill="#141414" textLength="13" lengthAdjust="spacingAndGlyphs" stroke="#141414" stroke-width="0.150">1m</text>
<text x="762" y="343" font-size="11.5" fill="#141414" textLength="13.5" lengthAdjust="spacingAndGlyphs" stroke="#141414" stroke-width="0.150">1m</text>
<text x="830.5" y="322" font-size="11.5" fill="#141414" textLength="19.5" lengthAdjust="spacingAndGlyphs" stroke="#141414" stroke-width="0.150">R13</text>
<text x="827" y="335" font-size="11.5" fill="#141414" textLength="20" lengthAdjust="spacingAndGlyphs" stroke="#141414" stroke-width="0.150">10m</text>
<text x="888" y="332" font-size="11.5" fill="#141414" textLength="12.5" lengthAdjust="spacingAndGlyphs" stroke="#141414" stroke-width="0.150">10</text>
<text x="847" y="355" font-size="11.5" fill="#141414" textLength="12" lengthAdjust="spacingAndGlyphs" stroke="#141414" stroke-width="0.150">1f</text>
<text x="479" y="195" font-size="13" fill="#8a1818" textLength="13.5" lengthAdjust="spacingAndGlyphs">fb</text>
<text x="436" y="286" font-size="13" fill="#8a1818" textLength="14.5" lengthAdjust="spacingAndGlyphs">in</text>
<text x="782.5" y="292" font-size="13" fill="#8a1818" textLength="22.5" lengthAdjust="spacingAndGlyphs">out</text>
<text x="749.5" y="132.5" font-size="11" fill="#202020">A</text>
<text x="748" y="331" font-size="11" fill="#303030" font-family="'Liberation Sans', sans-serif">B</text>
<text x="833" y="299" font-size="11" fill="#303030" font-family="'Liberation Sans', sans-serif">C</text>
</g>
</svg>
<div id="vsb">
<div class="sbb" style="left:1px;top:0"><svg width="13" height="13" style="left:0;top:0"><path d="M2.500 8.500l4-4l4 4" fill="none" stroke="#4d6185" stroke-width="2.200"/></svg></div>
<div class="sbt" style="left:1px;top:17px;width:15px;height:26px"><svg width="13" height="24" style="left:0;top:0"><path d="M4 9.500h5M4 11.500h5M4 13.500h5M4 15.500h5" stroke="#eef4fe" stroke-width="1"/></svg></div>
<div class="sbb" style="left:1px;top:309px"><svg width="13" height="13" style="left:0;top:0"><path d="M2.500 4.500l4 4l4-4" fill="none" stroke="#4d6185" stroke-width="2.200"/></svg></div>
</div>
<div id="hsb">
<div class="sbb" style="left:1px;top:1px"><svg width="13" height="13" style="left:0;top:0"><path d="M8.500 2.500l-4 4l4 4" fill="none" stroke="#4d6185" stroke-width="2.200"/></svg></div>
<div class="sbt h" style="left:17px;top:1px;width:327px;height:15px"><svg width="324" height="13" style="left:0;top:0"><path d="M159.500 4v5M161.500 4v5M163.500 4v5M165.500 4v5" stroke="#eef4fe" stroke-width="1"/></svg></div>
<div class="sbb" style="left:1068px;top:1px"><svg width="13" height="13" style="left:0;top:0"><path d="M4.500 2.500l4 4l-4 4" fill="none" stroke="#4d6185" stroke-width="2.200"/></svg></div>
</div>
<div id="sbcorner"></div>
<div id="split"></div>
<svg id="wave" width="1085" height="515" viewBox="176 434 1085 515" font-family="'Liberation Sans', sans-serif">
<rect x="176" y="434" width="1085" height="515" fill="#000"/>
<g shape-rendering="crispEdges">
<path d="M416.5 470V949" stroke="#b8b8b8"/>
<path d="M571.5 470V949" stroke="#b8b8b8"/>
<path d="M726.5 470V949" stroke="#b8b8b8"/>
<path d="M881.5 470V949" stroke="#b8b8b8"/>
<path d="M1035.5 470V949" stroke="#b8b8b8"/>
<path d="M292.5 470V477 M323.5 470V477 M354.5 470V477 M385.5 470V477 M447.5 470V477 M478.5 470V477 M509.5 470V477 M540.5 470V477 M602.5 470V477 M633.5 470V477 M664.5 470V477 M695.5 470V477 M757.5 470V477 M788.5 470V477 M819.5 470V477 M850.5 470V477 M912.5 470V477 M943.5 470V477 M974.5 470V477 M1005.5 470V477 M1066.5 470V477 M1097.5 470V477 M1128.5 470V477 M1159.5 470V477" stroke="#c8c8c8"/>
<path d="M176 454.5H1261 M176 469.5H1261 M176 728.5H1261 M176 938.5H1261" stroke="#fff"/>
<path d="M261.5 470V949 M1190.5 470V949" stroke="#fff"/>
<path d="M1184 470.5H1190 M1185 726.500H1190 M1185 730.500H1190 M1185 936.500H1190" stroke="#a0a0c0"/>
</g>
<path d="M262.0 566.5L263.0 566.5L264.0 566.5L265.0 566.5L266.0 566.5L267.0 566.5L268.0 566.5L269.0 566.5L270.0 566.5L271.0 566.5L272.0 566.5L273.0 566.5L274.0 566.5L275.0 566.5L276.0 566.5L277.0 566.5L278.0 566.5L279.0 566.5L280.0 566.5L281.0 566.5L282.0 566.5L283.0 566.5L284.0 566.5L285.0 566.5L286.0 566.5L287.0 566.5L288.0 566.5L289.0 566.5L290.0 566.5L291.0 566.5L292.0 566.5L293.0 566.5L294.0 566.5L295.0 566.5L296.0 566.5L297.0 566.5L298.0 566.5L299.0 566.5L300.0 566.5L301.0 566.5L302.0 566.5L303.0 566.5L304.0 566.5L305.0 566.5L306.0 566.5L307.0 566.5L308.0 566.5L309.0 566.5L310.0 566.5L311.0 566.5L312.0 566.5L313.0 566.5L314.0 566.5L315.0 566.5L316.0 566.5L317.0 566.5L318.0 566.5L319.0 566.5L320.0 566.5L321.0 566.5L322.0 566.5L323.0 566.5L324.0 566.5L325.0 566.5L326.0 566.5L327.0 566.5L328.0 566.5L329.0 566.5L330.0 566.5L331.0 566.5L332.0 566.5L333.0 566.5L334.0 566.5L335.0 566.5L336.0 566.5L337.0 566.5L338.0 566.5L339.0 566.5L339.6 566.5L340.0 565.5L341.0 564.4L342.0 563.2L343.0 562.1L344.0 560.9L345.0 559.7L346.0 558.5L347.0 557.3L348.0 556.1L349.0 554.8L350.0 553.6L351.0 552.3L352.0 551.0L353.0 549.7L354.0 548.4L355.0 547.1L356.0 545.8L357.0 544.5L358.0 543.2L359.0 541.8L360.0 540.5L361.0 539.1L362.0 537.8L363.0 536.5L364.0 535.1L365.0 533.8L366.0 532.4L367.0 531.1L368.0 529.7L369.0 528.4L370.0 527.1L371.0 525.8L372.0 524.5L373.0 523.2L374.0 521.9L375.0 520.6L376.0 519.3L377.0 518.1L378.0 516.9L379.0 515.6L380.0 514.4L381.0 513.2L382.0 512.1L383.0 510.9L384.0 509.8L385.0 508.7L386.0 507.6L387.0 506.6L388.0 505.5L389.0 504.5L390.0 503.6L391.0 502.6L392.0 501.7L393.0 500.8L394.0 499.9L395.0 499.1L396.0 498.3L397.0 497.5L398.0 496.8L399.0 496.1L400.0 495.5L401.0 494.8L402.0 494.2L403.0 493.7L404.0 493.2L405.0 492.7L406.0 492.2L407.0 491.8L408.0 491.5L409.0 491.2L410.0 490.9L411.0 490.6L412.0 490.4L413.0 490.3L414.0 490.1L415.0 490.0L416.0 490.0L417.0 490.0L418.0 490.0L419.0 490.1L420.0 490.2L421.0 490.4L422.0 490.6L423.0 490.8L424.0 491.1L425.0 491.4L426.0 491.8L427.0 492.2L428.0 492.6L429.0 493.1L430.0 493.6L431.0 494.2L432.0 494.8L433.0 495.4L434.0 496.0L435.0 496.7L436.0 497.5L437.0 498.2L438.0 499.0L439.0 499.9L440.0 500.7L441.0 501.6L442.0 502.5L443.0 503.5L444.0 504.4L445.0 505.4L446.0 506.5L447.0 507.5L448.0 508.6L449.0 509.7L450.0 510.8L451.0 512.0L452.0 513.1L453.0 514.3L454.0 515.5L455.0 516.7L456.0 518.0L457.0 519.2L458.0 520.5L459.0 521.8L460.0 523.0L461.0 524.3L462.0 525.6L463.0 527.0L464.0 528.3L465.0 529.6L466.0 530.9L467.0 532.3L468.0 533.6L469.0 535.0L470.0 536.3L471.0 537.7L472.0 539.0L473.0 540.3L474.0 541.7L475.0 543.0L476.0 544.4L477.0 545.7L478.0 547.0L479.0 548.3L480.0 549.6L481.0 550.9L482.0 552.2L483.0 553.5L484.0 554.7L485.0 556.0L486.0 557.2L487.0 558.4L488.0 559.6L489.0 560.8L490.0 562.0L491.0 563.1L492.0 564.3L493.0 565.4L494.0 566.5L495.0 567.6L496.0 568.7L497.0 569.8L498.0 570.8L499.0 571.9L500.0 572.9L501.0 574.0L502.0 575.0L503.0 576.0L504.0 577.0L505.0 578.0L506.0 578.9L507.0 579.9L508.0 580.8L509.0 581.7L510.0 582.6L511.0 583.4L512.0 584.3L513.0 585.1L514.0 585.9L515.0 586.6L516.0 587.4L517.0 588.1L518.0 588.8L519.0 589.4L520.0 590.1L521.0 590.7L522.0 591.3L523.0 591.8L524.0 592.4L525.0 592.9L526.0 593.3L527.0 593.8L528.0 594.2L529.0 594.6L530.0 595.0L531.0 595.4L532.0 595.7L533.0 596.0L534.0 596.3L535.0 596.6L536.0 596.8L537.0 597.0L538.0 597.2L539.0 597.4L540.0 597.6L541.0 597.7L542.0 597.9L543.0 598.0L544.0 598.1L545.0 598.2L546.0 598.2L547.0 598.3L548.0 598.4L549.0 598.4L550.0 598.4L551.0 598.4L552.0 598.4L553.0 598.4L554.0 598.4L555.0 598.4L556.0 598.4L557.0 598.4L558.0 598.4L559.0 598.4L560.0 598.4L561.0 598.4L562.0 598.4L563.0 598.4L564.0 598.4L565.0 598.4L566.0 598.3L567.0 598.3L568.0 598.3L569.0 598.3L570.0 598.3L571.0 598.3L572.0 598.3L573.0 598.3L574.0 598.3L575.0 598.3L576.0 598.3L577.0 598.3L578.0 598.4L579.0 598.4L580.0 598.4L581.0 598.4L582.0 598.4L583.0 598.4L584.0 598.4L585.0 598.4L586.0 598.4L587.0 598.4L588.0 598.4L589.0 598.4L590.0 598.4L591.0 598.4L592.0 598.4L593.0 598.4L594.0 598.4L595.0 598.4L596.0 598.3L597.0 598.2L598.0 598.2L599.0 598.1L600.0 598.0L601.0 597.9L602.0 597.7L603.0 597.6L604.0 597.4L605.0 597.2L606.0 597.0L607.0 596.8L608.0 596.5L609.0 596.3L610.0 596.0L611.0 595.7L612.0 595.3L613.0 595.0L614.0 594.6L615.0 594.2L616.0 593.8L617.0 593.3L618.0 592.8L619.0 592.3L620.0 591.8L621.0 591.2L622.0 590.6L623.0 590.0L624.0 589.4L625.0 588.7L626.0 588.0L627.0 587.3L628.0 586.5L629.0 585.8L630.0 585.0L631.0 584.2L632.0 583.3L633.0 582.5L634.0 581.6L635.0 580.7L636.0 579.8L637.0 578.8L638.0 577.9L639.0 576.9L640.0 575.9L641.0 574.9L642.0 573.9L643.0 572.8L644.0 571.8L645.0 570.7L646.0 569.6L647.0 568.6L648.0 567.5L649.0 566.4L650.0 565.3L651.0 564.2L652.0 563.0L653.0 561.9L654.0 560.7L655.0 559.5L656.0 558.3L657.0 557.1L658.0 555.8L659.0 554.6L660.0 553.3L661.0 552.1L662.0 550.8L663.0 549.5L664.0 548.2L665.0 546.9L666.0 545.5L667.0 544.2L668.0 542.9L669.0 541.6L670.0 540.2L671.0 538.9L672.0 537.5L673.0 536.2L674.0 534.8L675.0 533.5L676.0 532.2L677.0 530.8L678.0 529.5L679.0 528.2L680.0 526.8L681.0 525.5L682.0 524.2L683.0 522.9L684.0 521.6L685.0 520.3L686.0 519.1L687.0 517.8L688.0 516.6L689.0 515.4L690.0 514.2L691.0 513.0L692.0 511.8L693.0 510.7L694.0 509.6L695.0 508.5L696.0 507.4L697.0 506.4L698.0 505.3L699.0 504.3L700.0 503.4L701.0 502.4L702.0 501.5L703.0 500.6L704.0 499.8L705.0 498.9L706.0 498.2L707.0 497.4L708.0 496.7L709.0 496.0L710.0 495.3L711.0 494.7L712.0 494.1L713.0 493.6L714.0 493.1L715.0 492.6L716.0 492.2L717.0 491.8L718.0 491.4L719.0 491.1L720.0 490.8L721.0 490.6L722.0 490.4L723.0 490.2L724.0 490.1L725.0 490.0L726.0 490.0L727.0 490.0L728.0 490.1L729.0 490.1L730.0 490.3L731.0 490.4L732.0 490.6L733.0 490.9L734.0 491.2L735.0 491.5L736.0 491.9L737.0 492.3L738.0 492.7L739.0 493.2L740.0 493.7L741.0 494.3L742.0 494.9L743.0 495.5L744.0 496.2L745.0 496.9L746.0 497.6L747.0 498.4L748.0 499.2L749.0 500.0L750.0 500.9L751.0 501.8L752.0 502.7L753.0 503.7L754.0 504.6L755.0 505.6L756.0 506.7L757.0 507.7L758.0 508.8L759.0 509.9L760.0 511.0L761.0 512.2L762.0 513.4L763.0 514.5L764.0 515.8L765.0 517.0L766.0 518.2L767.0 519.5L768.0 520.7L769.0 522.0L770.0 523.3L771.0 524.6L772.0 525.9L773.0 527.2L774.0 528.5L775.0 529.9L776.0 531.2L777.0 532.6L778.0 533.9L779.0 535.2L780.0 536.6L781.0 537.9L782.0 539.3L783.0 540.6L784.0 542.0L785.0 543.3L786.0 544.6L787.0 545.9L788.0 547.3L789.0 548.6L790.0 549.9L791.0 551.2L792.0 552.4L793.0 553.7L794.0 555.0L795.0 556.2L796.0 557.4L797.0 558.7L798.0 559.9L799.0 561.0L800.0 562.2L801.0 563.4L802.0 564.5L803.0 565.6L804.0 566.7L805.0 567.8L806.0 568.9L807.0 570.0L808.0 571.0L809.0 572.1L810.0 573.1L811.0 574.2L812.0 575.2L813.0 576.2L814.0 577.2L815.0 578.2L816.0 579.1L817.0 580.1L818.0 581.0L819.0 581.9L820.0 582.7L821.0 583.6L822.0 584.4L823.0 585.2L824.0 586.0L825.0 586.8L826.0 587.5L827.0 588.2L828.0 588.9L829.0 589.6L830.0 590.2L831.0 590.8L832.0 591.4L833.0 591.9L834.0 592.5L835.0 593.0L836.0 593.4L837.0 593.9L838.0 594.3L839.0 594.7L840.0 595.1L841.0 595.4L842.0 595.8L843.0 596.1L844.0 596.4L845.0 596.6L846.0 596.9L847.0 597.1L848.0 597.3L849.0 597.5L850.0 597.6L851.0 597.8L852.0 597.9L853.0 598.0L854.0 598.1L855.0 598.2L856.0 598.3L857.0 598.3L858.0 598.4L859.0 598.4L860.0 598.4L861.0 598.4L862.0 598.4L863.0 598.4L864.0 598.4L865.0 598.4L866.0 598.4L867.0 598.4L868.0 598.4L869.0 598.4L870.0 598.4L871.0 598.4L872.0 598.4L873.0 598.4L874.0 598.4L875.0 598.3L876.0 598.3L877.0 598.3L878.0 598.3L879.0 598.3L880.0 598.3L881.0 598.3L882.0 598.3L883.0 598.3L884.0 598.3L885.0 598.3L886.0 598.3L887.0 598.3L888.0 598.4L889.0 598.4L890.0 598.4L891.0 598.4L892.0 598.4L893.0 598.4L894.0 598.4L895.0 598.4L896.0 598.4L897.0 598.4L898.0 598.4L899.0 598.4L900.0 598.4L901.0 598.4L902.0 598.4L903.0 598.4L904.0 598.4L905.0 598.4L906.0 598.3L907.0 598.2L908.0 598.1L909.0 598.1L910.0 597.9L911.0 597.8L912.0 597.7L913.0 597.5L914.0 597.4L915.0 597.2L916.0 597.0L917.0 596.7L918.0 596.5L919.0 596.2L920.0 595.9L921.0 595.6L922.0 595.3L923.0 594.9L924.0 594.5L925.0 594.1L926.0 593.7L927.0 593.2L928.0 592.7L929.0 592.2L930.0 591.7L931.0 591.1L932.0 590.5L933.0 589.9L934.0 589.2L935.0 588.6L936.0 587.9L937.0 587.1L938.0 586.4L939.0 585.6L940.0 584.8L941.0 584.0L942.0 583.2L943.0 582.3L944.0 581.4L945.0 580.5L946.0 579.6L947.0 578.6L948.0 577.7L949.0 576.7L950.0 575.7L951.0 574.7L952.0 573.7L953.0 572.6L954.0 571.6L955.0 570.5L956.0 569.4L957.0 568.4L958.0 567.3L959.0 566.2L960.0 565.1L961.0 563.9L962.0 562.8L963.0 561.6L964.0 560.4L965.0 559.3L966.0 558.0L967.0 556.8L968.0 555.6L969.0 554.3L970.0 553.1L971.0 551.8L972.0 550.5L973.0 549.2L974.0 547.9L975.0 546.6L976.0 545.3L977.0 544.0L978.0 542.6L979.0 541.3L980.0 539.9L981.0 538.6L982.0 537.3L983.0 535.9L984.0 534.6L985.0 533.2L986.0 531.9L987.0 530.5L988.0 529.2L989.0 527.9L990.0 526.6L991.0 525.3L992.0 523.9L993.0 522.7L994.0 521.4L995.0 520.1L996.0 518.8L997.0 517.6L998.0 516.4L999.0 515.1L1000.0 514.0L1001.0 512.8L1002.0 511.6L1003.0 510.5L1004.0 509.4L1005.0 508.3L1006.0 507.2L1007.0 506.2L1008.0 505.1L1009.0 504.1L1010.0 503.2L1011.0 502.2L1012.0 501.3L1013.0 500.4L1014.0 499.6L1015.0 498.8L1016.0 498.0L1017.0 497.2L1018.0 496.5L1019.0 495.8L1020.0 495.2L1021.0 494.6L1022.0 494.0L1023.0 493.5L1024.0 493.0L1025.0 492.5L1026.0 492.1L1027.0 491.7L1028.0 491.3L1029.0 491.0L1030.0 490.8L1031.0 490.5L1032.0 490.4L1033.0 490.2L1034.0 490.1L1035.0 490.0L1036.0 490.0L1037.0 490.0L1038.0 490.1L1039.0 490.2L1040.0 490.3L1041.0 490.5L1042.0 490.7L1043.0 491.0L1044.0 491.2L1045.0 491.6L1046.0 492.0L1047.0 492.4L1048.0 492.8L1049.0 493.3L1050.0 493.8L1051.0 494.4L1052.0 495.0L1053.0 495.6L1054.0 496.3L1055.0 497.0L1056.0 497.8L1057.0 498.5L1058.0 499.4L1059.0 500.2L1060.0 501.1L1061.0 502.0L1062.0 502.9L1063.0 503.8L1064.0 504.8L1065.0 505.8L1066.0 506.9L1067.0 507.9L1068.0 509.0L1069.0 510.1L1070.0 511.3L1071.0 512.4L1072.0 513.6L1073.0 514.8L1074.0 516.0L1075.0 517.2L1076.0 518.5L1077.0 519.7L1078.0 521.0L1079.0 522.3L1080.0 523.6L1081.0 524.9L1082.0 526.2L1083.0 527.5L1084.0 528.8L1085.0 530.1L1086.0 531.5L1087.0 532.8L1088.0 534.2L1089.0 535.5L1090.0 536.9L1091.0 538.2L1092.0 539.5L1093.0 540.9L1094.0 542.2L1095.0 543.6L1096.0 544.9L1097.0 546.2L1098.0 547.5L1099.0 548.8L1100.0 550.1L1101.0 551.4L1102.0 552.7L1103.0 554.0L1104.0 555.2L1105.0 556.5L1106.0 557.7L1107.0 558.9L1108.0 560.1L1109.0 561.3L1110.0 562.4L1111.0 563.6L1112.0 564.7L1113.0 565.8L1114.0 566.9L1115.0 568.0L1116.0 569.1L1117.0 570.2L1118.0 571.3L1119.0 572.3L1120.0 573.4L1121.0 574.4L1122.0 575.4L1123.0 576.4L1124.0 577.4L1125.0 578.4L1126.0 579.3L1127.0 580.2L1128.0 581.2L1129.0 582.0L1130.0 582.9L1131.0 583.8L1132.0 584.6L1133.0 585.4L1134.0 586.2L1135.0 586.9L1136.0 587.7L1137.0 588.4L1138.0 589.0L1139.0 589.7L1140.0 590.3L1141.0 590.9L1142.0 591.5L1143.0 592.0L1144.0 592.6L1145.0 593.1L1146.0 593.5L1147.0 594.0L1148.0 594.4L1149.0 594.8L1150.0 595.2L1151.0 595.5L1152.0 595.8L1153.0 596.1L1154.0 596.4L1155.0 596.7L1156.0 596.9L1157.0 597.1L1158.0 597.3L1159.0 597.5L1160.0 597.6L1161.0 597.8L1162.0 597.9L1163.0 598.0L1164.0 598.1L1165.0 598.2L1166.0 598.3L1167.0 598.3L1168.0 598.4L1169.0 598.4L1170.0 598.4L1171.0 598.4L1172.0 598.4L1173.0 598.4L1174.0 598.4L1175.0 598.4L1176.0 598.4L1177.0 598.4L1178.0 598.4L1179.0 598.4L1180.0 598.4L1181.0 598.4L1182.0 598.4L1183.0 598.4L1184.0 598.4L1185.0 598.3L1186.0 598.3L1187.0 598.3L1188.0 598.3L1189.0 598.3L1190.0 598.3" fill="none" stroke="#28f028" stroke-width="2.5" stroke-linejoin="round"/>
<path d="M262.0 630.8L263.0 630.8L264.0 630.8L265.0 630.8L266.0 630.8L267.0 630.8L268.0 630.8L269.0 630.8L270.0 630.8L271.0 630.8L272.0 630.8L273.0 630.8L274.0 630.8L275.0 630.8L276.0 630.8L277.0 630.8L278.0 630.8L279.0 630.8L280.0 630.8L281.0 630.8L282.0 630.8L283.0 630.8L284.0 630.8L285.0 630.8L286.0 630.8L287.0 630.8L288.0 630.8L289.0 630.8L290.0 630.8L291.0 630.8L292.0 630.8L293.0 630.8L294.0 630.8L295.0 630.8L296.0 630.8L297.0 630.8L298.0 630.8L299.0 630.8L300.0 630.8L301.0 630.8L302.0 630.8L303.0 630.8L304.0 630.8L305.0 630.8L306.0 630.8L307.0 630.8L308.0 630.8L309.0 630.8L310.0 630.8L311.0 630.8L312.0 630.8L313.0 630.8L314.0 630.8L315.0 630.8L316.0 630.8L317.0 630.8L318.0 630.8L319.0 630.8L320.0 630.8L321.0 630.8L322.0 630.8L323.0 630.8L324.0 630.8L325.0 630.8L326.0 630.8L327.0 630.8L328.0 630.8L329.0 630.8L330.0 630.8L331.0 630.8L332.0 630.8L333.0 630.8L334.0 630.8L335.0 630.8L336.0 630.8L337.0 630.8L338.0 630.8L339.0 630.8L339.6 630.8L340.0 629.7L341.0 628.4L342.0 627.2L343.0 625.9L344.0 624.7L345.0 623.5L346.0 622.3L347.0 621.1L348.0 620.0L349.0 618.8L350.0 617.7L351.0 616.6L352.0 615.6L353.0 614.5L354.0 613.5L355.0 612.5L356.0 611.6L357.0 610.6L358.0 609.7L359.0 608.9L360.0 608.0L361.0 607.3L362.0 606.5L363.0 605.8L364.0 605.1L365.0 604.4L366.0 603.8L367.0 603.3L368.0 602.7L369.0 602.2L370.0 601.7L371.0 601.3L372.0 600.9L373.0 600.6L374.0 600.2L375.0 599.9L376.0 599.7L377.0 599.5L378.0 599.3L379.0 599.1L380.0 599.0L381.0 598.9L382.0 598.8L383.0 598.7L384.0 598.7L385.0 598.7L386.0 598.7L387.0 598.7L388.0 598.7L389.0 598.7L390.0 598.7L391.0 598.7L392.0 598.7L393.0 598.7L394.0 598.7L395.0 598.7L396.0 598.7L397.0 598.7L398.0 598.7L399.0 598.7L400.0 598.7L401.0 598.7L402.0 598.7L403.0 598.7L404.0 598.7L405.0 598.7L406.0 598.7L407.0 598.7L408.0 598.7L409.0 598.7L410.0 598.7L411.0 598.7L412.0 598.7L413.0 598.7L414.0 598.7L415.0 598.7L416.0 598.7L417.0 598.7L418.0 598.7L419.0 598.7L420.0 598.7L421.0 598.7L422.0 598.7L423.0 598.7L424.0 598.7L425.0 598.7L426.0 598.7L427.0 598.7L428.0 598.7L429.0 598.7L430.0 598.7L431.0 598.7L432.0 598.7L433.0 598.7L434.0 598.7L435.0 598.7L436.0 598.7L437.0 598.7L438.0 598.7L439.0 598.7L440.0 598.7L441.0 598.7L442.0 598.7L443.0 598.7L444.0 598.7L445.0 598.7L446.0 598.7L447.0 598.7L448.0 598.7L449.0 598.7L450.0 598.7L451.0 598.8L452.0 598.9L453.0 599.0L454.0 599.1L455.0 599.3L456.0 599.4L457.0 599.7L458.0 599.9L459.0 600.2L460.0 600.5L461.0 600.9L462.0 601.3L463.0 601.7L464.0 602.2L465.0 602.7L466.0 603.2L467.0 603.8L468.0 604.4L469.0 605.0L470.0 605.7L471.0 606.4L472.0 607.2L473.0 608.0L474.0 608.8L475.0 609.6L476.0 610.5L477.0 611.5L478.0 612.4L479.0 613.4L480.0 614.4L481.0 615.5L482.0 616.5L483.0 617.6L484.0 618.7L485.0 619.9L486.0 621.0L487.0 622.2L488.0 623.4L489.0 624.6L490.0 625.8L491.0 627.1L492.0 628.3L493.0 629.5L494.0 630.8L495.0 632.1L496.0 633.4L497.0 634.7L498.0 636.0L499.0 637.4L500.0 638.8L501.0 640.2L502.0 641.6L503.0 643.0L504.0 644.5L505.0 646.0L506.0 647.5L507.0 649.0L508.0 650.5L509.0 652.1L510.0 653.6L511.0 655.2L512.0 656.8L513.0 658.4L514.0 660.0L515.0 661.6L516.0 663.2L517.0 664.8L518.0 666.4L519.0 668.0L520.0 669.6L521.0 671.2L522.0 672.9L523.0 674.5L524.0 676.1L525.0 677.7L526.0 679.3L527.0 680.9L528.0 682.4L529.0 684.0L530.0 685.5L531.0 687.1L532.0 688.6L533.0 690.1L534.0 691.6L535.0 693.1L536.0 694.5L537.0 695.9L538.0 697.3L539.0 698.7L540.0 700.0L541.0 701.4L542.0 702.6L543.0 703.9L544.0 705.1L545.0 706.3L546.0 707.5L547.0 708.6L548.0 709.7L549.0 710.8L550.0 711.8L551.0 712.8L552.0 713.7L553.0 714.6L554.0 715.4L555.0 716.3L556.0 717.0L557.0 717.7L558.0 718.4L559.0 719.1L560.0 719.6L561.0 720.2L562.0 720.7L563.0 721.1L564.0 721.5L565.0 721.9L566.0 722.2L567.0 722.4L568.0 722.6L569.0 722.7L570.0 722.8L571.0 722.9L572.0 722.9L573.0 722.8L574.0 722.7L575.0 722.6L576.0 722.4L577.0 722.1L578.0 721.8L579.0 721.5L580.0 721.1L581.0 720.6L582.0 720.1L583.0 719.6L584.0 719.0L585.0 718.4L586.0 717.7L587.0 716.9L588.0 716.2L589.0 715.4L590.0 714.5L591.0 713.6L592.0 712.7L593.0 711.7L594.0 710.7L595.0 709.6L596.0 708.5L597.0 707.4L598.0 706.2L599.0 705.0L600.0 703.8L601.0 702.5L602.0 701.2L603.0 699.9L604.0 698.6L605.0 697.2L606.0 695.8L607.0 694.4L608.0 692.9L609.0 691.4L610.0 690.0L611.0 688.4L612.0 686.9L613.0 685.4L614.0 683.8L615.0 682.3L616.0 680.7L617.0 679.1L618.0 677.5L619.0 675.9L620.0 674.3L621.0 672.7L622.0 671.1L623.0 669.5L624.0 667.8L625.0 666.2L626.0 664.6L627.0 663.0L628.0 661.4L629.0 659.8L630.0 658.2L631.0 656.6L632.0 655.0L633.0 653.5L634.0 651.9L635.0 650.4L636.0 648.9L637.0 647.3L638.0 645.8L639.0 644.4L640.0 642.9L641.0 641.5L642.0 640.0L643.0 638.6L644.0 637.2L645.0 635.9L646.0 634.5L647.0 633.2L648.0 631.9L649.0 630.7L650.0 629.4L651.0 628.2L652.0 626.9L653.0 625.7L654.0 624.5L655.0 623.3L656.0 622.1L657.0 620.9L658.0 619.8L659.0 618.6L660.0 617.5L661.0 616.4L662.0 615.3L663.0 614.3L664.0 613.3L665.0 612.3L666.0 611.4L667.0 610.4L668.0 609.6L669.0 608.7L670.0 607.9L671.0 607.1L672.0 606.4L673.0 605.6L674.0 605.0L675.0 604.3L676.0 603.7L677.0 603.1L678.0 602.6L679.0 602.1L680.0 601.7L681.0 601.2L682.0 600.8L683.0 600.5L684.0 600.2L685.0 599.9L686.0 599.6L687.0 599.4L688.0 599.2L689.0 599.1L690.0 598.9L691.0 598.8L692.0 598.8L693.0 598.7L694.0 598.7L695.0 598.7L696.0 598.7L697.0 598.7L698.0 598.7L699.0 598.7L700.0 598.7L701.0 598.7L702.0 598.7L703.0 598.7L704.0 598.7L705.0 598.7L706.0 598.7L707.0 598.7L708.0 598.7L709.0 598.7L710.0 598.7L711.0 598.7L712.0 598.7L713.0 598.7L714.0 598.7L715.0 598.7L716.0 598.7L717.0 598.7L718.0 598.7L719.0 598.7L720.0 598.7L721.0 598.7L722.0 598.7L723.0 598.7L724.0 598.7L725.0 598.7L726.0 598.7L727.0 598.7L728.0 598.7L729.0 598.7L730.0 598.7L731.0 598.7L732.0 598.7L733.0 598.7L734.0 598.7L735.0 598.7L736.0 598.7L737.0 598.7L738.0 598.7L739.0 598.7L740.0 598.7L741.0 598.7L742.0 598.7L743.0 598.7L744.0 598.7L745.0 598.7L746.0 598.7L747.0 598.7L748.0 598.7L749.0 598.7L750.0 598.7L751.0 598.7L752.0 598.7L753.0 598.7L754.0 598.7L755.0 598.7L756.0 598.7L757.0 598.7L758.0 598.7L759.0 598.7L760.0 598.7L761.0 598.8L762.0 598.9L763.0 599.0L764.0 599.1L765.0 599.3L766.0 599.5L767.0 599.7L768.0 600.0L769.0 600.3L770.0 600.6L771.0 601.0L772.0 601.4L773.0 601.8L774.0 602.3L775.0 602.8L776.0 603.3L777.0 603.9L778.0 604.5L779.0 605.2L780.0 605.8L781.0 606.6L782.0 607.3L783.0 608.1L784.0 609.0L785.0 609.8L786.0 610.7L787.0 611.7L788.0 612.6L789.0 613.6L790.0 614.6L791.0 615.7L792.0 616.7L793.0 617.8L794.0 619.0L795.0 620.1L796.0 621.3L797.0 622.4L798.0 623.6L799.0 624.8L800.0 626.1L801.0 627.3L802.0 628.5L803.0 629.8L804.0 631.1L805.0 632.3L806.0 633.6L807.0 634.9L808.0 636.3L809.0 637.7L810.0 639.0L811.0 640.5L812.0 641.9L813.0 643.3L814.0 644.8L815.0 646.3L816.0 647.8L817.0 649.3L818.0 650.8L819.0 652.4L820.0 653.9L821.0 655.5L822.0 657.1L823.0 658.7L824.0 660.3L825.0 661.9L826.0 663.5L827.0 665.1L828.0 666.7L829.0 668.3L830.0 669.9L831.0 671.6L832.0 673.2L833.0 674.8L834.0 676.4L835.0 678.0L836.0 679.6L837.0 681.2L838.0 682.7L839.0 684.3L840.0 685.9L841.0 687.4L842.0 688.9L843.0 690.4L844.0 691.9L845.0 693.3L846.0 694.8L847.0 696.2L848.0 697.6L849.0 699.0L850.0 700.3L851.0 701.6L852.0 702.9L853.0 704.2L854.0 705.4L855.0 706.6L856.0 707.7L857.0 708.8L858.0 709.9L859.0 711.0L860.0 712.0L861.0 712.9L862.0 713.9L863.0 714.8L864.0 715.6L865.0 716.4L866.0 717.2L867.0 717.9L868.0 718.6L869.0 719.2L870.0 719.8L871.0 720.3L872.0 720.8L873.0 721.2L874.0 721.6L875.0 721.9L876.0 722.2L877.0 722.4L878.0 722.6L879.0 722.8L880.0 722.9L881.0 722.9L882.0 722.9L883.0 722.8L884.0 722.7L885.0 722.5L886.0 722.3L887.0 722.1L888.0 721.8L889.0 721.4L890.0 721.0L891.0 720.5L892.0 720.0L893.0 719.5L894.0 718.9L895.0 718.2L896.0 717.5L897.0 716.8L898.0 716.0L899.0 715.2L900.0 714.3L901.0 713.4L902.0 712.5L903.0 711.5L904.0 710.5L905.0 709.4L906.0 708.3L907.0 707.1L908.0 706.0L909.0 704.8L910.0 703.5L911.0 702.3L912.0 701.0L913.0 699.6L914.0 698.3L915.0 696.9L916.0 695.5L917.0 694.1L918.0 692.6L919.0 691.1L920.0 689.7L921.0 688.1L922.0 686.6L923.0 685.1L924.0 683.5L925.0 682.0L926.0 680.4L927.0 678.8L928.0 677.2L929.0 675.6L930.0 674.0L931.0 672.4L932.0 670.8L933.0 669.1L934.0 667.5L935.0 665.9L936.0 664.3L937.0 662.7L938.0 661.1L939.0 659.5L940.0 657.9L941.0 656.3L942.0 654.7L943.0 653.2L944.0 651.6L945.0 650.1L946.0 648.5L947.0 647.0L948.0 645.5L949.0 644.1L950.0 642.6L951.0 641.2L952.0 639.8L953.0 638.4L954.0 637.0L955.0 635.6L956.0 634.3L957.0 633.0L958.0 631.7L959.0 630.4L960.0 629.2L961.0 627.9L962.0 626.7L963.0 625.5L964.0 624.2L965.0 623.0L966.0 621.8L967.0 620.7L968.0 619.5L969.0 618.4L970.0 617.3L971.0 616.2L972.0 615.1L973.0 614.1L974.0 613.1L975.0 612.1L976.0 611.2L977.0 610.3L978.0 609.4L979.0 608.5L980.0 607.7L981.0 606.9L982.0 606.2L983.0 605.5L984.0 604.8L985.0 604.2L986.0 603.6L987.0 603.0L988.0 602.5L989.0 602.0L990.0 601.6L991.0 601.2L992.0 600.8L993.0 600.4L994.0 600.1L995.0 599.8L996.0 599.6L997.0 599.4L998.0 599.2L999.0 599.0L1000.0 598.9L1001.0 598.8L1002.0 598.8L1003.0 598.7L1004.0 598.7L1005.0 598.7L1006.0 598.7L1007.0 598.7L1008.0 598.7L1009.0 598.7L1010.0 598.7L1011.0 598.7L1012.0 598.7L1013.0 598.7L1014.0 598.7L1015.0 598.7L1016.0 598.7L1017.0 598.7L1018.0 598.7L1019.0 598.7L1020.0 598.7L1021.0 598.7L1022.0 598.7L1023.0 598.7L1024.0 598.7L1025.0 598.7L1026.0 598.7L1027.0 598.7L1028.0 598.7L1029.0 598.7L1030.0 598.7L1031.0 598.7L1032.0 598.7L1033.0 598.7L1034.0 598.7L1035.0 598.7L1036.0 598.7L1037.0 598.7L1038.0 598.7L1039.0 598.7L1040.0 598.7L1041.0 598.7L1042.0 598.7L1043.0 598.7L1044.0 598.7L1045.0 598.7L1046.0 598.7L1047.0 598.7L1048.0 598.7L1049.0 598.7L1050.0 598.7L1051.0 598.7L1052.0 598.7L1053.0 598.7L1054.0 598.7L1055.0 598.7L1056.0 598.7L1057.0 598.7L1058.0 598.7L1059.0 598.7L1060.0 598.7L1061.0 598.7L1062.0 598.7L1063.0 598.7L1064.0 598.7L1065.0 598.7L1066.0 598.7L1067.0 598.7L1068.0 598.7L1069.0 598.7L1070.0 598.7L1071.0 598.8L1072.0 598.9L1073.0 599.0L1074.0 599.2L1075.0 599.3L1076.0 599.5L1077.0 599.8L1078.0 600.0L1079.0 600.3L1080.0 600.7L1081.0 601.0L1082.0 601.4L1083.0 601.9L1084.0 602.4L1085.0 602.9L1086.0 603.4L1087.0 604.0L1088.0 604.6L1089.0 605.3L1090.0 606.0L1091.0 606.7L1092.0 607.5L1093.0 608.3L1094.0 609.1L1095.0 610.0L1096.0 610.9L1097.0 611.8L1098.0 612.8L1099.0 613.8L1100.0 614.8L1101.0 615.9L1102.0 617.0L1103.0 618.1L1104.0 619.2L1105.0 620.3L1106.0 621.5L1107.0 622.7L1108.0 623.9L1109.0 625.1L1110.0 626.3L1111.0 627.5L1112.0 628.8L1113.0 630.0L1114.0 631.3L1115.0 632.6L1116.0 633.9L1117.0 635.2L1118.0 636.6L1119.0 637.9L1120.0 639.3L1121.0 640.7L1122.0 642.2L1123.0 643.6L1124.0 645.1L1125.0 646.6L1126.0 648.1L1127.0 649.6L1128.0 651.1L1129.0 652.7L1130.0 654.3L1131.0 655.8L1132.0 657.4L1133.0 659.0L1134.0 660.6L1135.0 662.2L1136.0 663.8L1137.0 665.4L1138.0 667.0L1139.0 668.7L1140.0 670.3L1141.0 671.9L1142.0 673.5L1143.0 675.1L1144.0 676.7L1145.0 678.3L1146.0 679.9L1147.0 681.5L1148.0 683.1L1149.0 684.6L1150.0 686.2L1151.0 687.7L1152.0 689.2L1153.0 690.7L1154.0 692.2L1155.0 693.6L1156.0 695.1L1157.0 696.5L1158.0 697.9L1159.0 699.2L1160.0 700.6L1161.0 701.9L1162.0 703.2L1163.0 704.4L1164.0 705.6L1165.0 706.8L1166.0 707.9L1167.0 709.1L1168.0 710.1L1169.0 711.2L1170.0 712.2L1171.0 713.1L1172.0 714.1L1173.0 714.9L1174.0 715.8L1175.0 716.6L1176.0 717.3L1177.0 718.0L1178.0 718.7L1179.0 719.3L1180.0 719.9L1181.0 720.4L1182.0 720.9L1183.0 721.3L1184.0 721.7L1185.0 722.0L1186.0 722.3L1187.0 722.5L1188.0 722.7L1189.0 722.8L1190.0 722.9" fill="none" stroke="#faf028" stroke-width="2.5" stroke-linejoin="round"/>
<path d="M262.0 833.7L263.0 833.7L264.0 833.7L265.0 833.7L266.0 833.7L267.0 833.7L268.0 833.7L269.0 833.7L270.0 833.7L271.0 833.7L272.0 833.7L273.0 833.7L274.0 833.7L275.0 833.7L276.0 833.7L277.0 833.7L278.0 833.7L279.0 833.7L280.0 833.7L281.0 833.7L282.0 833.7L283.0 833.7L284.0 833.7L285.0 833.7L286.0 833.7L287.0 833.7L288.0 833.7L289.0 833.7L290.0 833.7L291.0 833.7L292.0 833.7L293.0 833.7L294.0 833.7L295.0 833.7L296.0 833.7L297.0 833.7L298.0 833.7L299.0 833.7L300.0 833.7L301.0 833.7L302.0 833.7L303.0 833.7L304.0 833.7L305.0 833.7L306.0 833.7L307.0 833.7L308.0 833.7L309.0 833.7L310.0 833.7L311.0 833.7L312.0 833.7L313.0 833.7L314.0 833.7L315.0 833.7L316.0 833.7L317.0 833.7L318.0 833.7L319.0 833.7L320.0 833.7L321.0 833.7L322.0 833.7L323.0 833.7L324.0 833.7L325.0 833.7L326.0 833.7L327.0 833.7L328.0 833.7L329.0 833.7L330.0 833.7L331.0 833.7L332.0 833.7L333.0 833.7L334.0 833.7L335.0 833.7L336.0 833.7L337.0 833.7L338.0 833.7L339.0 833.7L339.6 833.7L340.0 832.0L341.0 830.1L342.0 828.2L343.0 826.2L344.0 824.3L345.0 822.4L346.0 820.5L347.0 818.5L348.0 816.6L349.0 814.7L350.0 812.8L351.0 810.9L352.0 809.0L353.0 807.1L354.0 805.2L355.0 803.4L356.0 801.6L357.0 799.7L358.0 798.0L359.0 796.2L360.0 794.4L361.0 792.7L362.0 791.0L363.0 789.4L364.0 787.7L365.0 786.1L366.0 784.6L367.0 783.0L368.0 781.5L369.0 780.0L370.0 778.6L371.0 777.2L372.0 775.8L373.0 774.5L374.0 773.2L375.0 771.9L376.0 770.7L377.0 769.5L378.0 768.4L379.0 767.2L380.0 766.2L381.0 765.1L382.0 764.1L383.0 763.2L384.0 762.2L385.0 761.3L386.0 760.5L387.0 759.6L388.0 758.8L389.0 758.0L390.0 757.2L391.0 756.4L392.0 755.7L393.0 755.0L394.0 754.3L395.0 753.6L396.0 753.0L397.0 752.4L398.0 751.8L399.0 751.2L400.0 750.7L401.0 750.2L402.0 749.7L403.0 749.2L404.0 748.8L405.0 748.4L406.0 748.1L407.0 747.8L408.0 747.5L409.0 747.2L410.0 747.0L411.0 746.8L412.0 746.6L413.0 746.5L414.0 746.4L415.0 746.3L416.0 746.3L417.0 746.3L418.0 746.3L419.0 746.4L420.0 746.5L421.0 746.6L422.0 746.8L423.0 747.0L424.0 747.2L425.0 747.4L426.0 747.7L427.0 748.1L428.0 748.4L429.0 748.8L430.0 749.2L431.0 749.6L432.0 750.1L433.0 750.6L434.0 751.1L435.0 751.7L436.0 752.3L437.0 752.9L438.0 753.5L439.0 754.2L440.0 754.9L441.0 755.6L442.0 756.4L443.0 757.1L444.0 757.9L445.0 758.7L446.0 759.5L447.0 760.4L448.0 761.2L449.0 762.1L450.0 763.1L451.0 764.0L452.0 765.0L453.0 766.1L454.0 767.1L455.0 768.2L456.0 769.4L457.0 770.6L458.0 771.8L459.0 773.0L460.0 774.3L461.0 775.7L462.0 777.0L463.0 778.4L464.0 779.9L465.0 781.4L466.0 782.9L467.0 784.4L468.0 786.0L469.0 787.6L470.0 789.2L471.0 790.9L472.0 792.6L473.0 794.3L474.0 796.0L475.0 797.8L476.0 799.6L477.0 801.4L478.0 803.2L479.0 805.0L480.0 806.9L481.0 808.8L482.0 810.7L483.0 812.6L484.0 814.5L485.0 816.4L486.0 818.3L487.0 820.3L488.0 822.2L489.0 824.1L490.0 826.1L491.0 828.0L492.0 829.9L493.0 831.8L494.0 833.7L495.0 835.6L496.0 837.5L497.0 839.4L498.0 841.4L499.0 843.3L500.0 845.3L501.0 847.3L502.0 849.2L503.0 851.2L504.0 853.2L505.0 855.2L506.0 857.1L507.0 859.1L508.0 861.1L509.0 863.1L510.0 865.0L511.0 867.0L512.0 868.9L513.0 870.8L514.0 872.8L515.0 874.7L516.0 876.5L517.0 878.4L518.0 880.3L519.0 882.1L520.0 883.9L521.0 885.7L522.0 887.5L523.0 889.2L524.0 891.0L525.0 892.7L526.0 894.3L527.0 896.0L528.0 897.6L529.0 899.2L530.0 900.7L531.0 902.2L532.0 903.7L533.0 905.2L534.0 906.6L535.0 908.0L536.0 909.4L537.0 910.7L538.0 912.0L539.0 913.2L540.0 914.5L541.0 915.6L542.0 916.8L543.0 917.9L544.0 919.0L545.0 920.0L546.0 921.0L547.0 922.0L548.0 922.9L549.0 923.7L550.0 924.6L551.0 925.4L552.0 926.1L553.0 926.8L554.0 927.5L555.0 928.2L556.0 928.8L557.0 929.4L558.0 929.9L559.0 930.4L560.0 930.9L561.0 931.3L562.0 931.7L563.0 932.1L564.0 932.4L565.0 932.6L566.0 932.9L567.0 933.1L568.0 933.2L569.0 933.3L570.0 933.4L571.0 933.4L572.0 933.4L573.0 933.4L574.0 933.3L575.0 933.2L576.0 933.0L577.0 932.8L578.0 932.6L579.0 932.3L580.0 932.0L581.0 931.7L582.0 931.3L583.0 930.9L584.0 930.4L585.0 929.9L586.0 929.3L587.0 928.7L588.0 928.1L589.0 927.4L590.0 926.8L591.0 926.0L592.0 925.3L593.0 924.5L594.0 923.7L595.0 922.8L596.0 921.9L597.0 920.9L598.0 919.9L599.0 918.9L600.0 917.8L601.0 916.7L602.0 915.5L603.0 914.3L604.0 913.1L605.0 911.9L606.0 910.6L607.0 909.2L608.0 907.9L609.0 906.5L610.0 905.0L611.0 903.6L612.0 902.1L613.0 900.6L614.0 899.0L615.0 897.4L616.0 895.8L617.0 894.2L618.0 892.5L619.0 890.8L620.0 889.1L621.0 887.3L622.0 885.5L623.0 883.7L624.0 881.9L625.0 880.1L626.0 878.2L627.0 876.4L628.0 874.5L629.0 872.6L630.0 870.6L631.0 868.7L632.0 866.8L633.0 864.8L634.0 862.9L635.0 860.9L636.0 858.9L637.0 856.9L638.0 855.0L639.0 853.0L640.0 851.0L641.0 849.0L642.0 847.1L643.0 845.1L644.0 843.1L645.0 841.2L646.0 839.3L647.0 837.3L648.0 835.4L649.0 833.5L650.0 831.6L651.0 829.7L652.0 827.8L653.0 825.9L654.0 823.9L655.0 822.0L656.0 820.1L657.0 818.1L658.0 816.2L659.0 814.3L660.0 812.4L661.0 810.5L662.0 808.6L663.0 806.7L664.0 804.9L665.0 803.0L666.0 801.2L667.0 799.4L668.0 797.6L669.0 795.8L670.0 794.1L671.0 792.4L672.0 790.7L673.0 789.0L674.0 787.4L675.0 785.8L676.0 784.2L677.0 782.7L678.0 781.2L679.0 779.7L680.0 778.3L681.0 776.9L682.0 775.5L683.0 774.2L684.0 772.9L685.0 771.7L686.0 770.4L687.0 769.3L688.0 768.1L689.0 767.0L690.0 765.9L691.0 764.9L692.0 763.9L693.0 763.0L694.0 762.0L695.0 761.2L696.0 760.3L697.0 759.4L698.0 758.6L699.0 757.8L700.0 757.0L701.0 756.3L702.0 755.5L703.0 754.8L704.0 754.1L705.0 753.5L706.0 752.8L707.0 752.2L708.0 751.6L709.0 751.1L710.0 750.6L711.0 750.1L712.0 749.6L713.0 749.2L714.0 748.7L715.0 748.4L716.0 748.0L717.0 747.7L718.0 747.4L719.0 747.2L720.0 746.9L721.0 746.7L722.0 746.6L723.0 746.5L724.0 746.4L725.0 746.3L726.0 746.3L727.0 746.3L728.0 746.3L729.0 746.4L730.0 746.5L731.0 746.6L732.0 746.8L733.0 747.0L734.0 747.2L735.0 747.5L736.0 747.8L737.0 748.1L738.0 748.5L739.0 748.9L740.0 749.3L741.0 749.7L742.0 750.2L743.0 750.7L744.0 751.3L745.0 751.8L746.0 752.4L747.0 753.0L748.0 753.7L749.0 754.3L750.0 755.0L751.0 755.8L752.0 756.5L753.0 757.3L754.0 758.1L755.0 758.9L756.0 759.7L757.0 760.6L758.0 761.4L759.0 762.3L760.0 763.2L761.0 764.2L762.0 765.2L763.0 766.3L764.0 767.3L765.0 768.5L766.0 769.6L767.0 770.8L768.0 772.0L769.0 773.3L770.0 774.6L771.0 775.9L772.0 777.3L773.0 778.7L774.0 780.2L775.0 781.7L776.0 783.2L777.0 784.7L778.0 786.3L779.0 787.9L780.0 789.5L781.0 791.2L782.0 792.9L783.0 794.6L784.0 796.4L785.0 798.1L786.0 799.9L787.0 801.7L788.0 803.6L789.0 805.4L790.0 807.3L791.0 809.2L792.0 811.1L793.0 813.0L794.0 814.9L795.0 816.8L796.0 818.7L797.0 820.6L798.0 822.6L799.0 824.5L800.0 826.4L801.0 828.4L802.0 830.3L803.0 832.2L804.0 834.1L805.0 836.0L806.0 837.9L807.0 839.8L808.0 841.8L809.0 843.7L810.0 845.7L811.0 847.7L812.0 849.6L813.0 851.6L814.0 853.6L815.0 855.6L816.0 857.5L817.0 859.5L818.0 861.5L819.0 863.4L820.0 865.4L821.0 867.4L822.0 869.3L823.0 871.2L824.0 873.1L825.0 875.0L826.0 876.9L827.0 878.8L828.0 880.6L829.0 882.5L830.0 884.3L831.0 886.1L832.0 887.8L833.0 889.6L834.0 891.3L835.0 893.0L836.0 894.7L837.0 896.3L838.0 897.9L839.0 899.5L840.0 901.0L841.0 902.5L842.0 904.0L843.0 905.5L844.0 906.9L845.0 908.3L846.0 909.6L847.0 911.0L848.0 912.2L849.0 913.5L850.0 914.7L851.0 915.9L852.0 917.0L853.0 918.1L854.0 919.2L855.0 920.2L856.0 921.2L857.0 922.1L858.0 923.1L859.0 923.9L860.0 924.7L861.0 925.5L862.0 926.3L863.0 927.0L864.0 927.6L865.0 928.3L866.0 928.9L867.0 929.5L868.0 930.0L869.0 930.5L870.0 931.0L871.0 931.4L872.0 931.8L873.0 932.1L874.0 932.4L875.0 932.7L876.0 932.9L877.0 933.1L878.0 933.2L879.0 933.3L880.0 933.4L881.0 933.4L882.0 933.4L883.0 933.4L884.0 933.3L885.0 933.2L886.0 933.0L887.0 932.8L888.0 932.6L889.0 932.3L890.0 932.0L891.0 931.6L892.0 931.2L893.0 930.8L894.0 930.3L895.0 929.8L896.0 929.2L897.0 928.6L898.0 928.0L899.0 927.3L900.0 926.6L901.0 925.9L902.0 925.1L903.0 924.3L904.0 923.5L905.0 922.6L906.0 921.7L907.0 920.7L908.0 919.7L909.0 918.6L910.0 917.6L911.0 916.4L912.0 915.3L913.0 914.1L914.0 912.9L915.0 911.6L916.0 910.3L917.0 909.0L918.0 907.6L919.0 906.2L920.0 904.8L921.0 903.3L922.0 901.8L923.0 900.3L924.0 898.7L925.0 897.1L926.0 895.5L927.0 893.8L928.0 892.1L929.0 890.4L930.0 888.7L931.0 887.0L932.0 885.2L933.0 883.4L934.0 881.6L935.0 879.7L936.0 877.9L937.0 876.0L938.0 874.1L939.0 872.2L940.0 870.3L941.0 868.3L942.0 866.4L943.0 864.4L944.0 862.5L945.0 860.5L946.0 858.5L947.0 856.5L948.0 854.6L949.0 852.6L950.0 850.6L951.0 848.6L952.0 846.7L953.0 844.7L954.0 842.8L955.0 840.8L956.0 838.9L957.0 836.9L958.0 835.0L959.0 833.1L960.0 831.2L961.0 829.3L962.0 827.4L963.0 825.5L964.0 823.5L965.0 821.6L966.0 819.7L967.0 817.8L968.0 815.8L969.0 813.9L970.0 812.0L971.0 810.1L972.0 808.2L973.0 806.3L974.0 804.5L975.0 802.6L976.0 800.8L977.0 799.0L978.0 797.2L979.0 795.5L980.0 793.8L981.0 792.0L982.0 790.4L983.0 788.7L984.0 787.1L985.0 785.5L986.0 783.9L987.0 782.4L988.0 780.9L989.0 779.4L990.0 778.0L991.0 776.6L992.0 775.3L993.0 774.0L994.0 772.7L995.0 771.4L996.0 770.2L997.0 769.0L998.0 767.9L999.0 766.8L1000.0 765.7L1001.0 764.7L1002.0 763.7L1003.0 762.8L1004.0 761.9L1005.0 761.0L1006.0 760.1L1007.0 759.3L1008.0 758.5L1009.0 757.7L1010.0 756.9L1011.0 756.1L1012.0 755.4L1013.0 754.7L1014.0 754.0L1015.0 753.3L1016.0 752.7L1017.0 752.1L1018.0 751.5L1019.0 751.0L1020.0 750.5L1021.0 750.0L1022.0 749.5L1023.0 749.1L1024.0 748.7L1025.0 748.3L1026.0 748.0L1027.0 747.6L1028.0 747.4L1029.0 747.1L1030.0 746.9L1031.0 746.7L1032.0 746.6L1033.0 746.4L1034.0 746.4L1035.0 746.3L1036.0 746.3L1037.0 746.3L1038.0 746.3L1039.0 746.4L1040.0 746.5L1041.0 746.7L1042.0 746.8L1043.0 747.0L1044.0 747.3L1045.0 747.6L1046.0 747.9L1047.0 748.2L1048.0 748.6L1049.0 748.9L1050.0 749.4L1051.0 749.8L1052.0 750.3L1053.0 750.8L1054.0 751.4L1055.0 751.9L1056.0 752.5L1057.0 753.2L1058.0 753.8L1059.0 754.5L1060.0 755.2L1061.0 755.9L1062.0 756.7L1063.0 757.4L1064.0 758.2L1065.0 759.0L1066.0 759.9L1067.0 760.7L1068.0 761.6L1069.0 762.5L1070.0 763.4L1071.0 764.4L1072.0 765.4L1073.0 766.5L1074.0 767.6L1075.0 768.7L1076.0 769.9L1077.0 771.1L1078.0 772.3L1079.0 773.6L1080.0 774.9L1081.0 776.2L1082.0 777.6L1083.0 779.0L1084.0 780.5L1085.0 782.0L1086.0 783.5L1087.0 785.0L1088.0 786.6L1089.0 788.2L1090.0 789.9L1091.0 791.5L1092.0 793.2L1093.0 795.0L1094.0 796.7L1095.0 798.5L1096.0 800.3L1097.0 802.1L1098.0 803.9L1099.0 805.8L1100.0 807.7L1101.0 809.5L1102.0 811.4L1103.0 813.3L1104.0 815.3L1105.0 817.2L1106.0 819.1L1107.0 821.0L1108.0 823.0L1109.0 824.9L1110.0 826.8L1111.0 828.7L1112.0 830.7L1113.0 832.6L1114.0 834.5L1115.0 836.4L1116.0 838.3L1117.0 840.2L1118.0 842.2L1119.0 844.1L1120.0 846.1L1121.0 848.0L1122.0 850.0L1123.0 852.0L1124.0 854.0L1125.0 856.0L1126.0 857.9L1127.0 859.9L1128.0 861.9L1129.0 863.8L1130.0 865.8L1131.0 867.7L1132.0 869.7L1133.0 871.6L1134.0 873.5L1135.0 875.4L1136.0 877.3L1137.0 879.2L1138.0 881.0L1139.0 882.8L1140.0 884.6L1141.0 886.4L1142.0 888.2L1143.0 889.9L1144.0 891.6L1145.0 893.3L1146.0 895.0L1147.0 896.6L1148.0 898.2L1149.0 899.8L1150.0 901.3L1151.0 902.8L1152.0 904.3L1153.0 905.8L1154.0 907.2L1155.0 908.6L1156.0 909.9L1157.0 911.2L1158.0 912.5L1159.0 913.7L1160.0 914.9L1161.0 916.1L1162.0 917.2L1163.0 918.3L1164.0 919.4L1165.0 920.4L1166.0 921.4L1167.0 922.3L1168.0 923.2L1169.0 924.1L1170.0 924.9L1171.0 925.7L1172.0 926.4L1173.0 927.1L1174.0 927.8L1175.0 928.4L1176.0 929.0L1177.0 929.6L1178.0 930.1L1179.0 930.6L1180.0 931.1L1181.0 931.5L1182.0 931.9L1183.0 932.2L1184.0 932.5L1185.0 932.7L1186.0 933.0L1187.0 933.1L1188.0 933.3L1189.0 933.4L1190.0 933.4" fill="none" stroke="#20e4f0" stroke-width="2.5" stroke-linejoin="round"/>
<text x="242" y="466" font-size="11" fill="#fff" font-family="'Liberation Sans', sans-serif" textLength="41" lengthAdjust="spacingAndGlyphs" stroke="#fff" stroke-width="0.25">0.000ms</text>
<text x="397" y="466" font-size="11" fill="#fff" font-family="'Liberation Sans', sans-serif" textLength="41" lengthAdjust="spacingAndGlyphs" stroke="#fff" stroke-width="0.25">0.500ms</text>
<text x="552" y="466" font-size="11" fill="#fff" font-family="'Liberation Sans', sans-serif" textLength="41" lengthAdjust="spacingAndGlyphs" stroke="#fff" stroke-width="0.25">1.000ms</text>
<text x="707" y="466" font-size="11" fill="#fff" font-family="'Liberation Sans', sans-serif" textLength="41" lengthAdjust="spacingAndGlyphs" stroke="#fff" stroke-width="0.25">1.500ms</text>
<text x="862" y="466" font-size="11" fill="#fff" font-family="'Liberation Sans', sans-serif" textLength="41" lengthAdjust="spacingAndGlyphs" stroke="#fff" stroke-width="0.25">2.000ms</text>
<text x="1016" y="466" font-size="11" fill="#fff" font-family="'Liberation Sans', sans-serif" textLength="41" lengthAdjust="spacingAndGlyphs" stroke="#fff" stroke-width="0.25">2.500ms</text>
<text x="1171" y="466" font-size="11" fill="#fff" font-family="'Liberation Sans', sans-serif" textLength="41" lengthAdjust="spacingAndGlyphs" stroke="#fff" stroke-width="0.25">3.000ms</text>
<text x="186" y="484" font-size="11" fill="#20e020" font-family="'Liberation Sans', sans-serif" textLength="66" lengthAdjust="spacingAndGlyphs">A: v7#branch</text>
<text x="186" y="499" font-size="11" fill="#f0f060" font-family="'Liberation Sans', sans-serif" textLength="37" lengthAdjust="spacingAndGlyphs">B: r12[i]</text>
<text x="186.5" y="743" font-size="11" fill="#20d8e8" font-family="'Liberation Sans', sans-serif" textLength="28" lengthAdjust="spacingAndGlyphs">C: out</text>
<text x="1195" y="482" font-size="11" fill="#fff" font-family="'Liberation Sans', sans-serif" textLength="43" lengthAdjust="spacingAndGlyphs" stroke="#fff" stroke-width="0.25">750.0mA</text>
<text x="1192.5" y="725" font-size="11" fill="#fff" font-family="'Liberation Sans', sans-serif" textLength="46.5" lengthAdjust="spacingAndGlyphs" stroke="#fff" stroke-width="0.25">-750.0mA</text>
<text x="1195.5" y="741" font-size="11" fill="#fff" font-family="'Liberation Sans', sans-serif" textLength="42" lengthAdjust="spacingAndGlyphs" stroke="#fff" stroke-width="0.25">7.500mV</text>
<text x="1192.5" y="935" font-size="11" fill="#fff" font-family="'Liberation Sans', sans-serif" textLength="45.5" lengthAdjust="spacingAndGlyphs" stroke="#fff" stroke-width="0.25">-7.500mV</text>
</svg>
<div id="wsb">
<div class="btn" style="left:0;top:0;width:17px;height:17px"><svg width="16" height="17" style="left:-1px;top:-1px"><path d="M5 10h7l-3.500-3.500z" fill="#000"/></svg></div>
<div class="btn" style="left:0;top:17px;width:17px;height:17px"></div>
<div class="btn" style="left:0;top:498px;width:17px;height:17px"><svg width="16" height="17" style="left:-1px;top:-1px"><path d="M5 7h7l-3.500 3.500z" fill="#000"/></svg></div>
</div>
<div id="tabs">
<svg width="1102" height="24" viewBox="176 949 1102 24" style="left:0;top:0">
<path d="M185 955.500H248.500Q250 956 250 958L253.500 970.500H342L346 955.500H1278" fill="none" stroke="#000"/>
<path d="M185 955.500L189 970.500H247L250.500 962L249.500 957L248 955.500Z" fill="#fff" stroke="#000" stroke-linejoin="round"/>
</svg>
<span class="t" style="left:14.5px;top:8px;font-size:12px;color:#000;transform:scaleX(0.859);">AC Analysis</span>
<span class="t" style="left:79px;top:8px;font-size:12px;color:#000;transform:scaleX(0.872);">Transient Analysis</span>
</div>
<div id="statusbar">
<i class="spane" style="left:0;width:50px"></i>
<i class="spane" style="left:52px;width:1228px"></i>
</div>
<div id="taskbar">
<div id="start">
<svg class="abs" style="left:10px;top:5px" width="20" height="19.500" viewBox="0 0 20 18" preserveAspectRatio="none"><path d="M2 2.500q3.500-2 7 0l-1 6q-3.500-2-7 0z" fill="#e8602c"/><path d="M10.500 3q3.500 2 7 0l-1 6q-3.500 2-7 0z" fill="#7cc142"/><path d="M0.700 9.800q3.500-2 7 0l-1 6q-3.500-2-7 0z" fill="#4a8df0"/><path d="M9.200 10.300q3.500 2 7 0l-1 6q-3.500 2-7 0z" fill="#f8c020"/></svg>
<span class="t" style="left:34.5px;top:6px;font-size:18px;color:#fff;font-weight:bold;font-style:italic;letter-spacing:-0.25px;text-shadow:1px 1px 1px #1a4a1a;">Start</span>
</div>
<div class="task act" style="left:108px">
<svg class="abs" style="left:11px;top:5px" width="16" height="16" viewBox="0 0 16 16"><rect x="0" y="0" width="16" height="16" fill="#f8b8f4"/><rect x="1.500" y="1.500" width="13" height="13" fill="#fdf4fc"/><path d="M2 4.500H10 M2 6.500H9 M3.500 4V12 M7.500 6.500V10.500H11" stroke="#504040" stroke-width="1" fill="none"/><path d="M10 2.300L14.300 4.800L10 7.300Z" fill="#d81818"/><circle cx="11" cy="4.800" r="2" fill="#d81818"/><ellipse cx="11.500" cy="11" rx="2.600" ry="2.100" fill="#1424b8"/><circle cx="4.800" cy="12" r="1.900" fill="#18a038"/><path d="M5 12.500Q8 13 9.500 11.500" stroke="#18a038" stroke-width="1.200" fill="none"/></svg>
<span class="t" style="left:30px;top:8px;font-size:11px;color:#fff;transform:scaleX(0.948);">CircuitMaker</span>
</div>
<div class="task" style="left:269px">
<svg class="abs" style="left:10px;top:4px" width="16" height="16" viewBox="0 0 16 16"><circle cx="8" cy="8" r="7.300" fill="#e05c10"/><circle cx="8.800" cy="6.800" r="4.600" fill="#3858c8"/><path d="M3.500 3.500q-1 4 2 6.500q3 2 7 0.500q1.500-1 2-3q1 5-3 7.500q-5 2-8.500-1.500q-3-4 0.500-10z" fill="#f09020"/><path d="M9.500 2.500q3 0.500 4.500 3.500q-2-1-4-0.500z" fill="#f8c840"/></svg>
<span class="t" style="left:30px;top:7px;font-size:11px;color:#fff;letter-spacing:-0.06px;">[1] Erősítő építése el...</span>
</div>
<div class="task" style="left:428px">
<svg class="abs" style="left:10px;top:4px" width="16" height="16" viewBox="0 0 16 16"><rect x="0.500" y="0.500" width="15" height="15" fill="#101070" stroke="#000040"/><rect x="3" y="1" width="10" height="6" fill="#f0f0f0"/><rect x="1" y="8" width="14" height="2" fill="#d02020"/><rect x="1" y="11" width="14" height="2" fill="#fff"/><rect x="4" y="12" width="8" height="3.500" fill="#c0c0c0"/></svg>
<span class="t" style="left:30px;top:7px;font-size:11px;color:#fff;letter-spacing:-0.04px;">Total Commander 6.5...</span>
</div>
<div class="task" style="left:588px">
<svg class="abs" style="left:10px;top:4px" width="16" height="16" viewBox="0 0 16 16"><rect x="0.500" y="0.500" width="15" height="15" fill="#d81818" stroke="#a01010"/><path d="M3 13q4-4 5-10q1 6 5 8q-5-1-10 2z" fill="none" stroke="#fff" stroke-width="1.400"/></svg>
<span class="t" style="left:30px;top:7px;font-size:11px;color:#fff;letter-spacing:-0.08px;">Adobe Reader - [FET ...</span>
</div>
<span class="t" style="left:1098px;top:10px;font-size:11px;color:#fff;transform:scaleX(0.912);">HU</span>
<div id="tray">
<svg class="abs" style="left:10px;top:5px" width="90" height="21" viewBox="1143 1000 90 21"><path d="M1147 1013l8-8l3 0l-6 8z" fill="#3050c0"/><path d="M1150 1013l7-7l2 1l-6 7z" fill="#30b040"/><path d="M1153 1013l5-5l1.500 1l-4 5z" fill="#e8d020"/><path d="M1155 1013l3.500-3.500l1 1l-2.500 3z" fill="#e03020"/><path d="M1145 1012l4 4h8" stroke="#fff" stroke-width="1.300" fill="none"/><path d="M1146 1016.500h11" stroke="#202020" stroke-width="1"/><path d="M1163 1004.500q3.500 0 6-1.500q2.500 1.500 6 1.500q0 8-6 11.500q-6-3.500-6-11.500z" fill="#d82020" stroke="#f0d0d0" stroke-width="0.800"/><path d="M1166.500 1006.500l5 5M1171.500 1006.500l-5 5" stroke="#fff" stroke-width="1.800"/><path d="M1181 1006.500h3l4-3.500v13l-4-3.500h-3z" fill="#e87828" stroke="#402010" stroke-width="0.800"/><path d="M1190 1004q2.500 5.500 0 11M1192.500 1003q3 6.500 0 13" fill="none" stroke="#102040" stroke-width="1.100"/><circle cx="1205" cy="1008" r="5.500" fill="#888888"/><circle cx="1206" cy="1007" r="2.500" fill="#d8d8d8"/><path d="M1207 1013l5 4" stroke="#a0b8e0" stroke-width="2.500"/><path d="M1220.500 1001.500h5l3.500 3.500v10l-3.500 3.500h-5l-3.500-3.500v-10z" fill="#1414b8"/><path d="M1220 1006.500l6 6l-3 3.500v-12l3 3.500l-6 6" fill="none" stroke="#e02020" stroke-width="1.600"/></svg>
<span class="t" style="left:107px;top:10px;font-size:11px;color:#fff;transform:scaleX(0.963);">19:16</span>
</div>
</div>
</div>
</body></html>
